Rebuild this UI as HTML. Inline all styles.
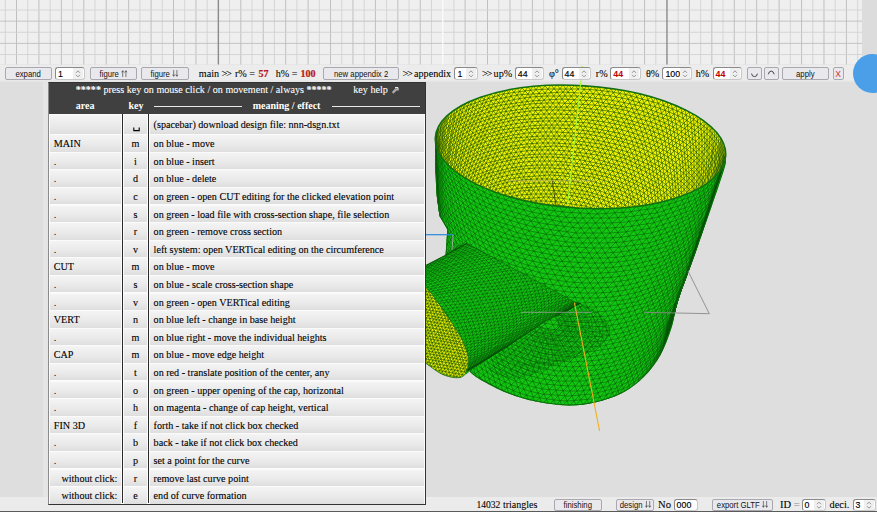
<!DOCTYPE html>
<html><head><meta charset="utf-8"><style>
html,body{margin:0;padding:0;overflow:hidden;}
body{width:877px;height:512px;overflow:hidden;position:relative;background:#dedede;font-family:"Liberation Sans",sans-serif;}
.a{position:absolute;}
.btn{position:absolute;box-sizing:border-box;border:1px solid #a8a8ae;border-radius:2px;background:#e9e9ed;color:#111;text-align:center;font-family:"Liberation Sans",sans-serif;white-space:nowrap;}
.inp{position:absolute;box-sizing:border-box;border:1px solid #8a8a8a;border-right-color:#c8c8c8;border-bottom-color:#c8c8c8;border-radius:3px;background:#fff;color:#000;font-family:"Liberation Sans",sans-serif;}
.spin{position:absolute;right:1px;top:0;width:10px;background:#efefef;display:flex;align-items:center;justify-content:center}
.lab{position:absolute;font-family:"Liberation Serif",serif;font-weight:normal;color:#000;white-space:nowrap;line-height:14px;-webkit-text-stroke:0.08px #000}
.cell{position:absolute;box-sizing:border-box;background:linear-gradient(#f4f4f4,#e9e9e9 60%,#dedede);font-family:"Liberation Serif",serif;font-size:10.15px;color:#000;white-space:nowrap;overflow:hidden;-webkit-text-stroke:0.1px #000}
</style></head><body>
<svg class="a" style="left:0;top:0" width="877" height="65" viewBox="0 0 877 65"><rect x="0" y="0" width="862" height="64.5" fill="#efefef"/><line x1="5.29" y1="0" x2="5.29" y2="64.5" stroke="#d2d2d2" stroke-width="0.9"/><line x1="16.5" y1="0" x2="16.5" y2="64.5" stroke="#c0c0c0" stroke-width="1"/><line x1="27.71" y1="0" x2="27.71" y2="64.5" stroke="#d2d2d2" stroke-width="0.9"/><line x1="38.93" y1="0" x2="38.93" y2="64.5" stroke="#c0c0c0" stroke-width="1"/><line x1="50.14" y1="0" x2="50.14" y2="64.5" stroke="#d2d2d2" stroke-width="0.9"/><line x1="61.36" y1="0" x2="61.36" y2="64.5" stroke="#c0c0c0" stroke-width="1"/><line x1="72.57" y1="0" x2="72.57" y2="64.5" stroke="#d2d2d2" stroke-width="0.9"/><line x1="83.79" y1="0" x2="83.79" y2="64.5" stroke="#c0c0c0" stroke-width="1"/><line x1="95" y1="0" x2="95" y2="64.5" stroke="#d2d2d2" stroke-width="0.9"/><line x1="106.22" y1="0" x2="106.22" y2="64.5" stroke="#c0c0c0" stroke-width="1"/><line x1="117.44" y1="0" x2="117.44" y2="64.5" stroke="#d2d2d2" stroke-width="0.9"/><line x1="128.65" y1="0" x2="128.65" y2="64.5" stroke="#c0c0c0" stroke-width="1"/><line x1="139.86" y1="0" x2="139.86" y2="64.5" stroke="#d2d2d2" stroke-width="0.9"/><line x1="151.08" y1="0" x2="151.08" y2="64.5" stroke="#c0c0c0" stroke-width="1"/><line x1="162.29" y1="0" x2="162.29" y2="64.5" stroke="#d2d2d2" stroke-width="0.9"/><line x1="173.51" y1="0" x2="173.51" y2="64.5" stroke="#c0c0c0" stroke-width="1"/><line x1="184.72" y1="0" x2="184.72" y2="64.5" stroke="#d2d2d2" stroke-width="0.9"/><line x1="195.94" y1="0" x2="195.94" y2="64.5" stroke="#c0c0c0" stroke-width="1"/><line x1="207.16" y1="0" x2="207.16" y2="64.5" stroke="#d2d2d2" stroke-width="0.9"/><line x1="229.59" y1="0" x2="229.59" y2="64.5" stroke="#d2d2d2" stroke-width="0.9"/><line x1="240.8" y1="0" x2="240.8" y2="64.5" stroke="#c0c0c0" stroke-width="1"/><line x1="252.02" y1="0" x2="252.02" y2="64.5" stroke="#d2d2d2" stroke-width="0.9"/><line x1="263.23" y1="0" x2="263.23" y2="64.5" stroke="#c0c0c0" stroke-width="1"/><line x1="274.44" y1="0" x2="274.44" y2="64.5" stroke="#d2d2d2" stroke-width="0.9"/><line x1="285.66" y1="0" x2="285.66" y2="64.5" stroke="#c0c0c0" stroke-width="1"/><line x1="296.88" y1="0" x2="296.88" y2="64.5" stroke="#d2d2d2" stroke-width="0.9"/><line x1="308.09" y1="0" x2="308.09" y2="64.5" stroke="#c0c0c0" stroke-width="1"/><line x1="319.31" y1="0" x2="319.31" y2="64.5" stroke="#d2d2d2" stroke-width="0.9"/><line x1="330.52" y1="0" x2="330.52" y2="64.5" stroke="#c0c0c0" stroke-width="1"/><line x1="341.74" y1="0" x2="341.74" y2="64.5" stroke="#d2d2d2" stroke-width="0.9"/><line x1="352.95" y1="0" x2="352.95" y2="64.5" stroke="#c0c0c0" stroke-width="1"/><line x1="364.17" y1="0" x2="364.17" y2="64.5" stroke="#d2d2d2" stroke-width="0.9"/><line x1="375.38" y1="0" x2="375.38" y2="64.5" stroke="#c0c0c0" stroke-width="1"/><line x1="386.6" y1="0" x2="386.6" y2="64.5" stroke="#d2d2d2" stroke-width="0.9"/><line x1="397.81" y1="0" x2="397.81" y2="64.5" stroke="#c0c0c0" stroke-width="1"/><line x1="409.03" y1="0" x2="409.03" y2="64.5" stroke="#d2d2d2" stroke-width="0.9"/><line x1="420.24" y1="0" x2="420.24" y2="64.5" stroke="#c0c0c0" stroke-width="1"/><line x1="431.46" y1="0" x2="431.46" y2="64.5" stroke="#d2d2d2" stroke-width="0.9"/><line x1="453.89" y1="0" x2="453.89" y2="64.5" stroke="#d2d2d2" stroke-width="0.9"/><line x1="465.1" y1="0" x2="465.1" y2="64.5" stroke="#c0c0c0" stroke-width="1"/><line x1="476.31" y1="0" x2="476.31" y2="64.5" stroke="#d2d2d2" stroke-width="0.9"/><line x1="487.53" y1="0" x2="487.53" y2="64.5" stroke="#c0c0c0" stroke-width="1"/><line x1="498.75" y1="0" x2="498.75" y2="64.5" stroke="#d2d2d2" stroke-width="0.9"/><line x1="509.96" y1="0" x2="509.96" y2="64.5" stroke="#c0c0c0" stroke-width="1"/><line x1="521.17" y1="0" x2="521.17" y2="64.5" stroke="#d2d2d2" stroke-width="0.9"/><line x1="532.39" y1="0" x2="532.39" y2="64.5" stroke="#c0c0c0" stroke-width="1"/><line x1="543.6" y1="0" x2="543.6" y2="64.5" stroke="#d2d2d2" stroke-width="0.9"/><line x1="554.82" y1="0" x2="554.82" y2="64.5" stroke="#c0c0c0" stroke-width="1"/><line x1="566.03" y1="0" x2="566.03" y2="64.5" stroke="#d2d2d2" stroke-width="0.9"/><line x1="577.25" y1="0" x2="577.25" y2="64.5" stroke="#c0c0c0" stroke-width="1"/><line x1="588.46" y1="0" x2="588.46" y2="64.5" stroke="#d2d2d2" stroke-width="0.9"/><line x1="599.68" y1="0" x2="599.68" y2="64.5" stroke="#c0c0c0" stroke-width="1"/><line x1="610.89" y1="0" x2="610.89" y2="64.5" stroke="#d2d2d2" stroke-width="0.9"/><line x1="622.11" y1="0" x2="622.11" y2="64.5" stroke="#c0c0c0" stroke-width="1"/><line x1="633.32" y1="0" x2="633.32" y2="64.5" stroke="#d2d2d2" stroke-width="0.9"/><line x1="644.54" y1="0" x2="644.54" y2="64.5" stroke="#c0c0c0" stroke-width="1"/><line x1="655.75" y1="0" x2="655.75" y2="64.5" stroke="#d2d2d2" stroke-width="0.9"/><line x1="678.18" y1="0" x2="678.18" y2="64.5" stroke="#d2d2d2" stroke-width="0.9"/><line x1="689.4" y1="0" x2="689.4" y2="64.5" stroke="#c0c0c0" stroke-width="1"/><line x1="700.62" y1="0" x2="700.62" y2="64.5" stroke="#d2d2d2" stroke-width="0.9"/><line x1="711.83" y1="0" x2="711.83" y2="64.5" stroke="#c0c0c0" stroke-width="1"/><line x1="723.04" y1="0" x2="723.04" y2="64.5" stroke="#d2d2d2" stroke-width="0.9"/><line x1="734.26" y1="0" x2="734.26" y2="64.5" stroke="#c0c0c0" stroke-width="1"/><line x1="745.47" y1="0" x2="745.47" y2="64.5" stroke="#d2d2d2" stroke-width="0.9"/><line x1="756.69" y1="0" x2="756.69" y2="64.5" stroke="#c0c0c0" stroke-width="1"/><line x1="767.9" y1="0" x2="767.9" y2="64.5" stroke="#d2d2d2" stroke-width="0.9"/><line x1="779.12" y1="0" x2="779.12" y2="64.5" stroke="#c0c0c0" stroke-width="1"/><line x1="790.33" y1="0" x2="790.33" y2="64.5" stroke="#d2d2d2" stroke-width="0.9"/><line x1="801.55" y1="0" x2="801.55" y2="64.5" stroke="#c0c0c0" stroke-width="1"/><line x1="812.76" y1="0" x2="812.76" y2="64.5" stroke="#d2d2d2" stroke-width="0.9"/><line x1="823.98" y1="0" x2="823.98" y2="64.5" stroke="#c0c0c0" stroke-width="1"/><line x1="835.19" y1="0" x2="835.19" y2="64.5" stroke="#d2d2d2" stroke-width="0.9"/><line x1="846.41" y1="0" x2="846.41" y2="64.5" stroke="#c0c0c0" stroke-width="1"/><line x1="857.62" y1="0" x2="857.62" y2="64.5" stroke="#d2d2d2" stroke-width="0.9"/><line x1="0" y1="10.03" x2="862" y2="10.03" stroke="#d2d2d2" stroke-width="0.9"/><line x1="0" y1="21.15" x2="862" y2="21.15" stroke="#c0c0c0" stroke-width="0.9"/><line x1="0" y1="32.28" x2="862" y2="32.28" stroke="#d2d2d2" stroke-width="0.9"/><line x1="0" y1="43.4" x2="862" y2="43.4" stroke="#c0c0c0" stroke-width="0.9"/><line x1="0" y1="54.53" x2="862" y2="54.53" stroke="#d2d2d2" stroke-width="0.9"/><line x1="218.37" y1="0" x2="218.37" y2="64.5" stroke="#8a8a8a" stroke-width="1.4"/><line x1="666.97" y1="0" x2="666.97" y2="64.5" stroke="#8a8a8a" stroke-width="1.4"/><line x1="442.67" y1="0" x2="442.67" y2="64.5" stroke="#fafafa" stroke-width="1.4"/></svg>
<div class="a" style="left:862px;top:0;width:15px;height:65px;background:#dcdcdc"></div>
<div class="a" style="left:0;top:64.6px;width:877px;height:17.4px;background:linear-gradient(#ececec 85%,#e4e4e4)"></div>
<div class="a" style="left:0;top:496.8px;width:877px;height:14px;background:#ebebeb"></div>
<div class="a" style="left:0;top:510.6px;width:877px;height:1.4px;background:#5a5a5a"></div>
<svg class="a" style="left:0;top:0" width="877" height="512" viewBox="0 0 877 512">
<defs>
<clipPath id="cc"><path d="M435 140 L435.2 170 L436.6 195 L439.5 216 L447.3 229.5 L445.5 256 L452 300 L470 372 L470 372C471.7 373.2 473.8 375.9 480 379.4C486.2 382.9 498.3 389.4 507.4 393C516.5 396.6 524.7 399.2 534.7 401.3C544.7 403.4 557.6 405.2 567.6 405.4C577.6 405.6 585.9 404.7 595 402.6C604.1 400.5 614.1 397.3 622.3 393C630.5 388.7 637.8 383 644.2 376.6C650.6 370.2 656 362.9 660.6 354.7C665.2 346.5 668.6 336.5 671.6 327.4C674.6 318.3 674.1 313.4 678.4 300C682.7 286.6 690 268.6 697.5 247.3C705 226 718.6 186.6 723.3 172C727.9 157.4 725 162 725.4 160 L724.5 146.2 L719.8 136.6 L711.6 127.2 L700.2 118.3 L685.9 110.1 L669 102.7 L649.8 96.5 L629 91.5 L607 87.9 L584.3 85.7 L561.6 85 L539.3 85.9 L518 88.2 L498.2 92 L480.5 97.2 L465.3 103.5 L452.9 111 L443.6 119.3 L437.7 128.2 L435.3 137.7Z"/></clipPath>
<clipPath id="ce"><ellipse cx="580.5" cy="146.8" rx="145.5" ry="61.2" transform="rotate(3.59 580.5 146.8)"/></clipPath>
<clipPath id="cy"><path d="M380 290C384.6 282.6 418.9 269 425.5 265.5C432.1 262 441.9 257.2 446 255C450.1 252.8 459.1 241.8 466.5 243.5C473.9 245.2 509.2 266.2 520 272C530.8 277.8 567.9 298.6 574.4 301.7C580.9 304.8 586.4 301.8 585 303C583.6 304.2 564.1 312.1 560 314C555.9 315.9 549.5 318.6 544 322C538.5 325.4 512.1 343.4 505 348C497.9 352.6 476.6 365.9 472.7 368.5C468.8 371.1 467.2 373.1 466 374C464.8 374.9 463.3 377.1 461 377.2C458.7 377.3 446.9 376.2 443.4 374.8C439.8 373.4 431.8 366.5 425.5 363C419.2 359.5 384.6 347.3 380 340C375.4 332.7 375.4 297.4 380 290Z"/></clipPath>
<clipPath id="cp"><path d="M400 270C404.2 260.3 418.3 280.3 425.5 287C432.7 293.7 438.1 303 443.4 310.4C448.7 317.8 453.6 324.9 457.5 331.5C461.4 338.1 465.1 344.4 466.8 350.3C468.6 356.2 469 362.1 468 366.6C467 371.1 465.1 375.8 461 377.2C456.9 378.6 449.3 377.2 443.4 374.8C437.5 372.4 432.7 368 425.5 363C418.3 358 404.2 360.5 400 345C395.8 329.5 395.8 279.7 400 270Z"/></clipPath>
</defs>
<path d="M435 140 L435.2 170 L436.6 195 L439.5 216 L447.3 229.5 L445.5 256 L452 300 L470 372 L470 372C471.7 373.2 473.8 375.9 480 379.4C486.2 382.9 498.3 389.4 507.4 393C516.5 396.6 524.7 399.2 534.7 401.3C544.7 403.4 557.6 405.2 567.6 405.4C577.6 405.6 585.9 404.7 595 402.6C604.1 400.5 614.1 397.3 622.3 393C630.5 388.7 637.8 383 644.2 376.6C650.6 370.2 656 362.9 660.6 354.7C665.2 346.5 668.6 336.5 671.6 327.4C674.6 318.3 674.1 313.4 678.4 300C682.7 286.6 690 268.6 697.5 247.3C705 226 718.6 186.6 723.3 172C727.9 157.4 725 162 725.4 160 L724.5 146.2 L719.8 136.6 L711.6 127.2 L700.2 118.3 L685.9 110.1 L669 102.7 L649.8 96.5 L629 91.5 L607 87.9 L584.3 85.7 L561.6 85 L539.3 85.9 L518 88.2 L498.2 92 L480.5 97.2 L465.3 103.5 L452.9 111 L443.6 119.3 L437.7 128.2 L435.3 137.7Z" fill="#12c612"/>
<g clip-path="url(#cc)"><path d="M726 154l-1 7l-3 7l-4 6l-7 6l-8 6l-9 5l-11 4l-12 4l-13 4l-14 2l-16 2l-15 1l-16 1l-17-1l-16-1l-16-2l-15-3l-16-3l-14-4l-13-5l-12-5l-11-6l-9-6l-8-6l-7-7l-4-7l-3-7l-1-7M724 159l-1 7l-2 7l-5 6l-6 6l-8 6l-9 5l-11 4l-12 4l-13 4l-15 2l-14 2l-16 1l-16 1l-16-1l-16-1l-16-2l-16-3l-15-4l-14-4l-13-4l-12-6l-11-5l-9-7l-8-6l-7-7l-4-7l-3-7l-1-7M723 164l-1 6l-3 7l-4 7l-6 6l-8 6l-10 5l-10 4l-12 4l-13 4l-15 2l-14 2l-16 1l-16 0l-16 0l-16-1l-16-2l-15-3l-15-4l-14-4l-13-5l-12-5l-11-6l-9-6l-8-7l-6-7l-5-7l-3-7l0-7M721 168l-1 7l-2 7l-5 7l-6 6l-8 5l-9 6l-11 4l-11 4l-14 4l-14 2l-14 2l-16 1l-16 0l-16 0l-16-1l-15-3l-16-2l-14-4l-15-4l-13-5l-12-6l-10-6l-9-6l-8-7l-6-7l-5-7l-2-7l-1-7M720 173l-1 7l-3 7l-4 6l-6 7l-8 5l-9 6l-11 4l-12 4l-13 4l-14 2l-14 2l-16 1l-15 0l-16 0l-16-2l-16-2l-15-3l-15-3l-14-5l-13-5l-12-5l-10-6l-9-7l-8-6l-6-7l-5-7l-2-8l-1-7M718 177l-1 7l-2 7l-5 7l-6 6l-7 6l-10 6l-10 4l-12 4l-13 4l-14 2l-14 2l-15 1l-16 0l-16 0l-16-2l-15-2l-16-3l-14-4l-14-4l-13-5l-12-6l-10-6l-9-6l-8-7l-6-7l-4-7l-3-8l-1-7M717 182l-1 7l-3 7l-4 7l-6 6l-8 6l-9 5l-10 5l-12 4l-13 4l-14 2l-14 2l-15 1l-16 0l-16 0l-15-2l-16-2l-15-3l-14-4l-14-4l-13-5l-12-6l-10-6l-9-7l-8-7l-6-7l-4-7l-3-8l-1-7M715 186l-1 8l-2 7l-5 7l-6 6l-7 6l-9 5l-11 5l-11 4l-13 4l-14 2l-14 2l-15 1l-16 0l-15 0l-16-2l-15-2l-15-3l-15-4l-13-5l-13-5l-12-6l-10-6l-9-6l-8-7l-6-8l-4-7l-3-7l-1-8M714 191l-1 7l-3 7l-4 7l-6 7l-7 6l-9 5l-11 5l-11 4l-13 4l-14 2l-14 2l-15 1l-15 0l-16-1l-15-1l-16-2l-15-4l-14-3l-14-5l-12-5l-12-6l-10-6l-9-7l-8-7l-6-7l-4-8l-3-7l-1-8M712 195l-1 8l-2 7l-4 7l-6 7l-8 6l-9 5l-10 5l-12 4l-12 4l-14 2l-14 2l-15 1l-15 0l-16-1l-15-1l-15-3l-15-3l-14-4l-14-4l-13-6l-11-5l-10-7l-9-7l-8-7l-6-7l-4-8l-3-7l0-8M711 200l-1 8l-3 7l-4 7l-6 6l-7 6l-9 6l-10 5l-12 4l-12 3l-14 3l-14 2l-15 1l-15 0l-15-1l-16-1l-15-3l-15-3l-14-4l-13-5l-13-5l-11-6l-10-6l-9-7l-8-7l-6-8l-4-7l-2-8l-1-8M709 204l-1 8l-2 7l-4 7l-6 7l-8 6l-8 6l-11 5l-11 4l-12 3l-14 3l-14 2l-15 1l-15 0l-15-1l-15-1l-15-3l-15-3l-14-4l-13-5l-13-5l-11-6l-10-7l-9-7l-8-7l-6-8l-4-7l-2-8l-1-8M708 209l-1 8l-3 7l-4 7l-6 7l-7 6l-9 6l-10 5l-11 4l-13 3l-13 3l-14 2l-14 1l-15 0l-16-1l-15-1l-15-3l-14-3l-14-4l-14-5l-12-6l-11-6l-10-6l-9-7l-8-8l-5-7l-5-8l-2-8l-1-8M706 213l-1 8l-2 8l-4 7l-6 7l-7 6l-9 5l-10 5l-11 5l-13 3l-13 3l-14 2l-14 1l-15 0l-15-1l-15-2l-15-2l-15-3l-14-5l-13-4l-12-6l-11-6l-10-7l-9-7l-8-7l-5-8l-4-8l-3-8l-1-8M705 218l-1 8l-3 7l-4 7l-5 7l-8 7l-8 5l-10 5l-12 5l-12 3l-13 3l-14 2l-14 1l-15 0l-15-1l-15-2l-15-2l-14-4l-14-4l-13-5l-12-5l-12-6l-10-7l-8-7l-7-8l-6-8l-4-8l-3-8l-1-7M703 222l-1 8l-2 8l-4 7l-6 7l-7 6l-9 6l-10 5l-11 5l-12 3l-13 3l-14 2l-14 1l-15 0l-15-1l-15-2l-14-2l-15-4l-13-4l-13-5l-13-6l-11-6l-10-7l-8-7l-7-7l-6-8l-4-8l-3-8l-1-8M702 227l-1 8l-3 7l-4 8l-5 7l-7 6l-9 6l-10 5l-11 4l-12 4l-13 3l-14 2l-14 1l-15 0l-14-1l-15-2l-15-2l-14-4l-14-4l-13-5l-12-6l-11-6l-10-7l-8-7l-7-8l-6-8l-4-8l-3-8l0-8M700 231l-1 8l-2 8l-4 7l-6 7l-7 7l-8 6l-10 5l-11 4l-12 4l-13 3l-14 2l-14 1l-14 0l-15-1l-15-2l-14-3l-14-3l-14-4l-13-5l-12-6l-11-7l-10-6l-8-8l-7-8l-6-8l-4-8l-2-8l-1-8M699 236l-1 8l-3 7l-4 8l-5 7l-7 7l-9 5l-9 6l-11 4l-12 4l-13 3l-14 2l-14 1l-14 0l-15-1l-14-2l-15-3l-14-3l-13-5l-13-5l-12-5l-11-7l-10-7l-8-7l-7-8l-6-8l-4-8l-2-9l-1-8M697 240l-1 8l-2 8l-4 8l-6 7l-7 6l-8 6l-10 5l-11 5l-11 4l-13 3l-14 1l-14 1l-14 1l-14-1l-15-2l-14-3l-14-3l-14-5l-12-5l-12-6l-11-6l-10-7l-8-8l-7-8l-6-8l-4-8l-2-8l-1-9M696 244l-1 9l-2 8l-4 7l-6 7l-7 7l-8 6l-10 5l-11 5l-12 4l-12 2l-13 2l-14 1l-15 0l-14 0l-14-2l-15-3l-14-4l-13-4l-13-5l-11-6l-11-7l-10-7l-8-7l-7-8l-6-8l-4-9l-2-8l-1-9M694 249l-1 8l-2 8l-4 8l-5 7l-7 7l-9 6l-9 5l-11 5l-12 3l-12 3l-13 2l-14 1l-14 0l-15 0l-14-2l-14-3l-14-4l-13-4l-13-5l-11-6l-11-7l-10-7l-8-8l-7-8l-5-8l-4-8l-3-9l-1-8M693 253l-1 8l-2 8l-4 8l-6 8l-7 6l-8 6l-9 6l-11 4l-12 4l-12 3l-13 2l-14 1l-14 0l-14-1l-15-1l-14-3l-13-4l-14-4l-12-6l-12-6l-10-6l-10-7l-8-8l-7-8l-5-8l-4-9l-3-9l-1-8M691 257l-1 9l-2 8l-4 8l-5 7l-7 7l-8 6l-10 6l-10 4l-12 4l-12 3l-13 2l-14 1l-14 0l-14-1l-14-1l-14-3l-14-4l-13-4l-12-6l-12-6l-10-6l-10-8l-8-7l-7-9l-5-8l-4-9l-3-8l0-9M690 262l-1 8l-2 8l-4 8l-6 8l-6 7l-9 6l-9 5l-10 5l-12 4l-12 3l-13 2l-14 1l-14 0l-14-1l-14-2l-14-2l-13-4l-13-5l-13-5l-11-6l-10-7l-10-7l-8-8l-7-8l-5-9l-4-8l-2-9l-1-9M688 266l-1 8l-2 9l-4 8l-5 7l-7 7l-8 7l-9 5l-11 5l-11 4l-12 3l-13 2l-14 1l-13 0l-14-1l-14-2l-14-2l-14-4l-13-5l-12-5l-11-6l-11-7l-9-7l-8-8l-7-9l-5-8l-4-9l-2-9l-1-8M687 270l-1 9l-2 8l-4 8l-5 8l-7 7l-8 6l-10 6l-10 5l-11 4l-12 3l-13 2l-14 1l-13 0l-14-1l-14-2l-14-2l-13-4l-13-5l-12-5l-11-6l-11-7l-9-8l-8-8l-7-8l-5-9l-4-8l-2-9l-1-9M685 274l0 9l-3 9l-4 8l-5 7l-7 7l-8 7l-9 6l-10 4l-11 4l-12 4l-13 2l-13 1l-14 0l-14-1l-14-2l-13-3l-13-3l-13-5l-12-5l-11-7l-11-7l-9-7l-8-8l-7-8l-5-9l-4-9l-2-9l-1-9M684 279l-1 8l-2 9l-4 8l-5 8l-7 7l-8 7l-9 5l-10 5l-11 4l-12 3l-13 3l-13 1l-14 0l-13-1l-14-2l-14-3l-13-3l-12-5l-12-6l-12-6l-10-7l-9-7l-8-8l-7-9l-5-9l-4-8l-2-9l-1-9M682 283l0 9l-3 8l-4 9l-5 7l-6 8l-8 6l-9 6l-10 5l-12 4l-11 3l-13 2l-13 2l-14 0l-13-1l-14-2l-13-3l-13-3l-13-5l-12-6l-11-6l-10-7l-9-8l-8-8l-7-8l-5-9l-3-9l-3-9l-1-9M681 287l-1 9l-2 9l-4 8l-5 8l-7 7l-8 7l-9 6l-10 5l-11 4l-11 3l-13 2l-13 2l-13 0l-14-1l-13-2l-14-3l-13-4l-12-4l-12-6l-11-6l-10-7l-9-8l-8-8l-6-9l-6-8l-3-9l-3-10l0-9M679 291l0 9l-3 9l-3 8l-6 8l-6 8l-8 6l-9 6l-10 5l-11 5l-11 3l-13 2l-13 1l-13 1l-13-1l-14-2l-13-3l-13-4l-12-4l-12-6l-11-6l-10-7l-9-8l-8-8l-6-9l-6-9l-3-9l-3-9l0-9M678 295l-1 9l-2 9l-4 9l-5 8l-6 7l-8 7l-9 6l-10 5l-11 4l-12 4l-12 2l-13 1l-13 1l-13-1l-13-2l-14-3l-12-4l-13-4l-11-6l-11-6l-10-8l-9-7l-8-9l-6-8l-5-9l-4-9l-2-10l-1-9M676 300l0 9l-3 9l-3 8l-5 8l-7 8l-7 7l-9 6l-10 5l-11 4l-12 3l-12 3l-13 1l-13 0l-13 0l-13-2l-13-3l-13-4l-12-5l-12-5l-11-7l-9-7l-9-7l-8-9l-6-8l-5-10l-4-9l-2-9l-1-9M675 304l-1 9l-2 9l-4 9l-5 8l-6 7l-8 7l-8 6l-10 5l-11 5l-12 3l-12 3l-12 1l-13 0l-14 0l-13-2l-13-3l-12-4l-12-5l-12-5l-11-7l-10-7l-8-8l-8-8l-6-9l-5-9l-4-9l-2-10l-1-9M673 308l0 9l-3 9l-3 9l-5 8l-6 8l-8 7l-9 6l-9 5l-11 5l-12 3l-12 2l-12 2l-13 0l-13 0l-13-2l-13-3l-13-4l-12-5l-11-5l-11-7l-10-7l-8-8l-8-8l-6-9l-5-9l-4-10l-2-9l-1-10M672 312l-1 9l-2 9l-4 9l-5 8l-6 8l-7 7l-9 6l-10 6l-10 4l-12 4l-12 2l-12 2l-13 0l-13-1l-13-1l-13-3l-12-4l-12-5l-11-5l-11-7l-10-7l-8-8l-8-8l-6-9l-5-10l-4-9l-2-10l-1-9M670 316l0 9l-2 10l-4 8l-5 9l-6 8l-8 7l-8 6l-10 5l-10 5l-12 4l-12 2l-12 2l-13 0l-13-1l-12-1l-13-3l-13-4l-11-5l-12-5l-10-7l-10-7l-8-8l-8-9l-6-9l-5-9l-4-9l-2-10l-1-10M669 320l-1 9l-2 10l-3 9l-5 8l-7 8l-7 7l-8 7l-10 5l-10 5l-12 3l-11 3l-13 1l-12 1l-13-1l-13-1l-13-3l-12-4l-12-5l-11-5l-10-7l-10-7l-8-8l-8-9l-6-9l-5-9l-4-10l-2-9l0-10M668 324l-1 10l-2 9l-4 9l-5 8l-6 8l-7 8l-9 6l-9 6l-11 4l-11 4l-11 3l-13 1l-12 1l-13-1l-13-2l-12-2l-12-4l-12-5l-11-6l-11-6l-9-7l-9-8l-7-9l-6-9l-5-9l-3-10l-3-10l0-10M666 328l-1 10l-2 9l-3 9l-5 9l-6 8l-8 7l-8 7l-9 5l-11 5l-11 4l-11 2l-12 2l-13 1l-13-1l-12-2l-13-2l-12-4l-11-5l-11-6l-11-6l-9-7l-9-9l-7-8l-6-9l-5-10l-3-9l-2-10l-1-10M669 320l-3 11M672 312l-3 11l-4 14M675 304l-3 10l-3 14l-4 14M678 295l-3 10l-3 14l-4 14l-5 14M678 296l-3 14l-4 14l-5 14l-4 14M681 287l-3 14l-4 14l-4 14l-5 14l-5 14M684 279l-3 12l-4 14l-4 14l-5 14l-5 14l-6 14M687 270l-3 12l-4 14l-4 14l-5 14l-5 14l-6 14l-6 14M690 262l-3 11l-4 14l-4 14l-5 14l-5 14l-5 14l-7 13l-6 14M693 253l-3 11l-4 14l-4 14l-5 14l-5 13l-5 14l-6 14l-7 14l-7 13M696 244l-3 11l-4 14l-4 13l-4 14l-5 14l-6 14l-6 14l-6 13l-7 14l-8 13M699 236l-3 10l-4 13l-4 14l-4 14l-5 14l-6 13l-6 14l-6 14l-7 13l-7 14l-8 13M702 227l-3 9l-4 14l-4 14l-4 14l-5 13l-6 14l-6 14l-6 13l-7 14l-7 13l-7 13l-8 14M702 227l-4 14l-3 13l-5 14l-5 14l-5 14l-6 13l-7 14l-6 13l-8 14l-7 13l-8 13l-8 13M705 218l-4 13l-3 14l-5 14l-5 13l-5 14l-6 14l-6 13l-7 14l-7 13l-8 13l-8 13l-8 13l-8 13M708 209l-3 13l-4 14l-5 13l-5 14l-5 14l-6 13l-6 14l-7 13l-7 13l-8 14l-8 13l-8 12l-8 13l-9 12M711 200l-3 13l-4 13l-5 14l-4 13l-6 14l-6 14l-6 13l-7 14l-7 13l-7 13l-8 13l-8 13l-9 12l-9 13l-8 12M714 191l-3 12l-4 14l-4 13l-5 14l-6 13l-5 14l-7 13l-7 14l-7 13l-7 13l-8 13l-8 13l-9 13l-8 12l-9 12l-9 12M717 182l-3 12l-4 13l-4 14l-5 13l-5 14l-6 13l-7 14l-6 13l-7 13l-8 14l-8 13l-8 12l-8 13l-9 12l-9 12l-9 12l-9 12M720 173l-3 11l-4 14l-4 13l-5 14l-5 13l-6 14l-6 13l-7 13l-7 14l-8 13l-8 13l-8 13l-8 12l-9 13l-9 12l-9 12l-9 11l-10 12M723 164l-3 11l-4 13l-4 14l-5 13l-5 14l-6 13l-6 13l-7 14l-7 13l-8 13l-7 13l-9 13l-8 12l-9 13l-9 12l-9 12l-9 11l-10 12l-9 11M726 154l-3 11l-4 14l-4 13l-5 14l-5 13l-6 13l-6 14l-7 13l-7 13l-7 13l-8 13l-8 13l-9 13l-9 12l-9 12l-9 12l-9 12l-10 11l-9 11l-9 11M726 156l-4 13l-4 14l-5 13l-5 13l-6 14l-6 13l-7 13l-7 13l-7 14l-8 12l-8 13l-9 13l-9 12l-9 12l-9 12l-9 12l-10 11l-9 11l-10 11l-9 10M726 156l-3 8M725 160l-4 13l-5 13l-5 14l-5 13l-7 13l-6 13l-7 14l-8 13l-8 13l-8 12l-9 13l-9 12l-9 12l-9 12l-9 12l-10 11l-9 11l-10 11l-9 11l-10 10M725 160l-2 5l-3 8M724 163l-4 14l-6 13l-5 13l-7 13l-6 14l-7 13l-8 13l-8 13l-8 12l-9 13l-8 12l-10 13l-9 12l-9 11l-10 12l-9 11l-10 10l-9 11l-10 10l-10 10M724 163l-2 6l-2 6l-3 7M723 167l-6 13l-5 13l-6 14l-7 13l-7 13l-8 13l-8 13l-8 13l-9 12l-8 13l-9 12l-10 12l-9 11l-10 12l-9 11l-10 11l-10 10l-9 10l-10 10l-9 9M723 167l-2 6l-2 6l-2 5l-3 7M721 170l-6 14l-6 13l-7 13l-7 13l-8 13l-8 13l-8 13l-8 12l-9 13l-9 12l-10 12l-9 11l-10 12l-10 11l-9 11l-10 10l-10 10l-9 10l-10 10l-9 9M721 170l-1 7l-2 6l-2 5l-2 6l-3 6M718 174l-6 13l-7 13l-7 13l-8 13l-7 13l-9 13l-8 12l-9 13l-9 12l-10 12l-9 11l-10 12l-10 11l-9 11l-10 10l-10 10l-10 10l-9 10l-10 9l-9 9M718 174l-1 6l-1 6l-1 6l-2 6l-2 5l-3 6M715 177l-7 13l-7 13l-7 13l-8 13l-9 13l-8 12l-9 13l-9 12l-10 12l-9 12l-10 11l-10 11l-10 11l-10 10l-9 11l-10 10l-10 9l-9 9l-10 9l-9 8M715 177l0 7l-1 6l-1 6l-1 6l-2 5l-2 6l-3 5l-3 9M711 180l-7 13l-7 13l-8 13l-9 13l-8 12l-9 13l-9 12l-10 12l-9 12l-10 11l-10 11l-10 11l-10 11l-10 10l-10 10l-9 9l-10 9l-9 9l-9 9l-9 8M711 180l1 7l0 6l-1 7l-1 6l-1 5l-2 6l-2 5l-3 5l-3 9M707 183l-7 13l-8 13l-9 13l-8 12l-9 13l-9 12l-10 12l-10 12l-9 11l-10 11l-10 11l-10 11l-10 10l-10 10l-10 9l-9 10l-10 9l-9 8l-9 8l-9 8M707 183l1 7l1 7l0 6l-1 6l-1 6l-1 6l-2 5l-3 5l-2 5l-3 8M703 186l-8 13l-9 13l-8 12l-9 13l-10 12l-9 12l-10 12l-10 11l-10 11l-10 11l-10 11l-10 10l-10 10l-9 10l-10 9l-10 9l-9 8l-9 8l-9 8l-8 8M703 186l1 7l1 7l1 7l0 6l-1 6l-1 6l-1 5l-2 6l-3 5l-2 5l-3 7M698 189l-9 13l-8 12l-9 13l-10 12l-9 12l-10 12l-10 11l-10 11l-10 11l-10 11l-10 10l-10 10l-10 10l-10 9l-9 9l-10 9l-9 8l-9 8l-8 7l-9 7M698 189l2 7l1 7l1 7l0 6l0 7l0 6l-1 5l-2 6l-1 5l-3 5l-2 5l-3 7M692 192l-8 12l-9 13l-10 12l-9 12l-10 12l-10 11l-10 11l-10 11l-10 11l-10 10l-11 10l-10 10l-9 9l-10 9l-10 9l-9 8l-9 8l-9 8l-8 7l-8 6M692 192l3 7l2 7l1 7l1 7l0 6l0 6l0 6l-1 6l-2 5l-1 5l-3 5l-2 5l-3 6M687 194l-9 13l-10 12l-9 12l-10 12l-10 11l-10 11l-10 11l-11 11l-10 10l-10 11l-10 9l-10 10l-10 9l-10 8l-9 9l-9 7l-9 8l-8 7l-8 7l-8 6M687 194l2 8l3 7l2 7l1 7l1 7l0 6l0 6l0 6l-1 5l-2 6l-2 5l-2 5l-2 4l-3 6M680 196l-9 13l-10 12l-9 12l-10 11l-11 11l-10 11l-10 11l-10 11l-11 10l-10 9l-10 10l-10 9l-9 9l-10 8l-9 8l-9 7l-8 8l-9 7l-7 6l-8 6M680 196l4 8l2 8l3 7l1 7l2 7l1 6l0 7l0 6l-1 5l-1 6l-1 5l-2 5l-2 5l-2 4l-3 5l-3 8M674 199l-10 12l-10 11l-10 12l-10 11l-10 11l-11 11l-10 11l-10 10l-10 10l-11 9l-10 9l-9 9l-10 8l-9 8l-9 8l-9 7l-8 7l-8 7l-7 6l-7 6M674 199l4 8l3 7l2 8l3 7l1 7l2 7l0 6l1 6l0 6l-1 6l-1 5l-1 6l-2 4l-2 5l-2 4l-3 5l-3 8M667 200l-10 12l-10 12l-10 11l-11 11l-10 11l-10 11l-11 10l-10 10l-10 9l-10 9l-10 9l-10 9l-9 8l-9 7l-9 8l-8 7l-8 6l-8 6l-7 6l-7 6M667 200l4 9l4 8l3 7l2 8l3 7l1 7l2 7l0 6l1 6l0 6l-1 6l-1 5l-1 5l-2 5l-2 4l-2 5l-3 4l-3 7M660 202l-10 12l-11 11l-10 11l-10 11l-11 11l-10 10l-11 10l-10 9l-10 10l-10 8l-10 9l-9 8l-9 8l-9 7l-9 7l-8 7l-7 6l-8 6l-6 6l-7 5M660 202l4 9l4 8l4 8l3 7l2 8l2 7l2 7l1 6l1 7l0 6l0 6l0 5l-1 5l-1 5l-2 5l-2 4l-2 5l-3 4l-3 6M652 204l-10 11l-10 11l-11 11l-11 11l-10 10l-10 10l-11 10l-10 9l-10 9l-10 8l-9 8l-10 8l-9 8l-8 7l-8 6l-8 7l-7 6l-7 5l-7 6l-5 5M652 204l5 8l4 9l4 8l4 8l3 7l2 8l2 7l2 7l1 6l1 6l0 6l0 6l0 6l-1 5l-2 5l-1 4l-2 5l-2 4l-3 4l-3 5M645 205l-11 11l-11 11l-10 11l-11 10l-10 10l-11 10l-10 9l-10 9l-10 9l-9 8l-10 8l-9 7l-8 7l-9 7l-8 6l-7 6l-7 6l-6 6l-6 5l-6 4M645 205l5 9l4 8l5 9l3 8l4 8l3 7l2 8l2 7l2 7l1 6l1 6l0 6l0 6l-1 5l0 5l-2 5l-1 4l-2 5l-2 4l-3 3M637 206l-11 11l-11 11l-10 10l-11 10l-10 10l-11 9l-10 9l-10 9l-10 8l-9 8l-9 8l-9 7l-8 7l-8 6l-8 6l-7 6l-6 5l-6 5l-6 5l-5 5M637 206l5 9l5 9l5 9l4 8l3 8l4 8l3 7l2 8l2 7l2 6l1 7l0 6l1 6l0 5l-1 5l-1 5l-1 5l-1 5l-2 4l-3 4M628 207l-10 11l-11 10l-11 10l-10 10l-11 9l-10 9l-10 9l-10 9l-9 7l-10 8l-8 7l-9 7l-8 7l-7 6l-8 6l-6 5l-6 5l-6 5l-5 5l-5 4M628 207l6 9l5 9l5 9l5 9l4 8l4 8l3 8l3 7l2 7l2 7l1 7l2 6l0 7l1 5l-1 6l0 5l-1 5l-1 4l-2 5l-1 4M620 208l-11 10l-10 10l-11 10l-11 10l-10 9l-10 8l-10 9l-10 8l-9 8l-9 7l-8 7l-9 6l-7 7l-7 6l-7 5l-7 5l-5 5l-5 5l-5 4l-4 4M620 208l6 9l6 9l5 9l5 9l4 9l4 8l4 8l3 8l2 7l3 7l2 7l1 7l1 6l1 6l0 6l0 5l0 5l-1 5l-1 5l-2 4M612 208l-11 10l-11 10l-11 10l-10 9l-10 9l-10 8l-10 8l-9 8l-9 7l-9 7l-8 7l-8 6l-7 6l-7 6l-7 5l-5 5l-6 5l-4 4l-5 4l-3 4M612 208l6 10l5 9l6 9l5 9l5 9l4 9l4 8l4 8l3 8l2 7l3 7l2 7l1 7l1 6l1 6l0 5l0 6l0 5l-1 4l-1 5M603 209l-11 9l-11 10l-10 9l-10 9l-10 9l-10 8l-10 8l-9 7l-9 7l-8 7l-8 6l-7 6l-7 6l-7 5l-6 5l-5 5l-5 4l-4 5l-4 4l-3 3M603 209l6 9l6 10l6 9l5 9l5 9l5 9l4 9l4 8l4 8l3 8l2 7l3 7l1 7l2 6l1 6l1 6l0 6l0 5l-1 5l0 5M594 209l-11 9l-10 9l-11 9l-10 9l-10 8l-9 8l-9 8l-9 7l-9 6l-8 7l-7 6l-7 6l-7 5l-6 5l-5 5l-5 5l-5 4l-3 4l-4 4l-2 3M594 209l7 9l6 10l6 10l6 9l5 9l5 9l4 9l4 9l4 8l4 8l3 7l2 8l2 7l2 7l2 6l1 6l0 6l1 5l-1 5l0 5M585 208l-10 10l-11 9l-10 8l-10 9l-10 7l-9 8l-9 7l-8 7l-8 7l-8 6l-7 6l-7 5l-6 5l-6 5l-5 5l-4 4l-4 4l-3 4l-3 3l-2 4M585 208l7 10l7 10l6 10l5 10l6 9l5 9l5 9l4 9l5 9l3 8l4 8l2 7l3 8l2 7l2 6l1 7l1 6l1 5l0 6l0 5M577 208l-11 9l-10 9l-10 8l-10 8l-9 8l-9 7l-9 7l-8 6l-8 7l-7 5l-7 6l-6 5l-6 5l-5 5l-5 4l-4 4l-3 4l-3 4l-2 3l-2 4M577 208l6 10l7 10l6 10l6 10l6 10l5 9l6 9l4 9l5 9l4 9l3 8l3 8l3 7l3 7l2 7l2 7l1 6l1 6l1 6l0 5M568 207l-10 9l-11 8l-9 8l-10 8l-9 8l-9 6l-8 7l-8 6l-7 6l-7 6l-6 5l-6 5l-5 5l-5 4l-4 5l-4 4l-3 3l-2 4l-2 3l-1 3M568 207l7 11l6 10l7 10l6 10l6 10l6 10l5 9l5 9l4 9l5 9l4 8l3 9l3 7l3 8l3 7l2 7l1 7l2 6l1 6l0 5M559 206l-10 9l-10 8l-10 8l-9 7l-9 7l-8 7l-8 6l-7 6l-7 6l-7 5l-6 5l-5 5l-5 5l-4 4l-3 4l-4 4l-2 3l-2 4l-1 3l-1 3M559 206l7 11l7 10l6 11l7 10l6 10l6 10l5 10l5 9l5 9l5 9l4 9l4 8l3 9l3 7l3 8l3 7l2 7l1 6l2 6l0 6M551 205l-10 8l-10 8l-9 8l-9 7l-9 7l-8 6l-7 6l-7 6l-7 5l-6 6l-5 4l-5 5l-4 4l-4 4l-3 4l-3 4l-2 3l-1 4l-1 3l0 3M551 205l7 11l6 11l7 10l6 11l7 10l6 10l5 10l6 10l5 9l4 9l5 9l4 9l4 8l3 8l3 8l3 8l2 7l2 6l2 7l1 6M542 204l-10 8l-9 7l-9 8l-9 6l-8 7l-7 6l-8 6l-6 5l-6 6l-6 5l-5 4l-4 5l-4 4l-3 4l-3 3l-2 4l-1 3l-1 3l0 3l0 7M542 204l7 11l7 11l6 10l7 11l6 10l6 11l6 10l6 10l5 9l5 10l5 9l4 9l4 9l4 8l3 8l3 8l3 7l2 7l2 7l2 7M534 202l-10 8l-9 7l-9 7l-8 7l-8 6l-7 6l-6 6l-7 5l-5 5l-5 5l-5 4l-4 4l-3 4l-3 4l-2 3l-1 4l-1 3l-1 3l1 6M534 202l7 11l6 11l7 11l7 11l6 11l6 10l6 11l6 10l5 10l6 9l4 10l5 9l4 9l4 9l4 8l3 8l3 8l3 7l2 7l2 7M525 201l-9 7l-9 7l-8 7l-8 6l-7 6l-7 6l-6 5l-6 5l-5 5l-4 4l-4 5l-4 4l-3 3l-2 4l-1 4l-1 3l-1 3l0 5M525 201l7 11l7 11l7 11l6 11l7 11l6 10l6 11l6 10l6 11l5 10l5 9l5 10l4 9l4 9l4 9l4 8l3 8l3 7l2 8l3 7M517 199l-8 7l-9 7l-8 6l-7 6l-7 6l-6 5l-6 5l-5 5l-5 5l-4 4l-4 4l-2 4l-3 4l-1 3l-1 4l-1 3l0 4M517 199l7 11l7 11l7 11l6 12l7 11l6 10l6 11l6 11l6 10l5 10l5 10l5 10l5 10l5 9l4 9l3 8l4 9l3 8l3 7l2 7M510 197l-9 6l-8 7l-7 6l-7 6l-7 5l-6 6l-5 4l-5 5l-4 5l-3 4l-3 4l-3 3l-1 4l-2 3l0 4l0 3M510 197l6 11l7 11l6 12l7 11l6 11l7 11l6 11l6 11l6 11l5 10l6 10l5 10l5 10l4 9l5 10l4 9l3 8l4 8l3 8l3 8M502 194l-8 7l-8 6l-7 6l-6 6l-6 5l-6 5l-4 5l-5 4l-3 4l-3 4l-3 4l-1 4l-2 3l0 4l0 3M502 194l7 12l6 11l7 12l6 11l6 11l7 12l6 11l6 11l6 11l6 10l5 11l5 10l5 10l5 10l5 9l4 10l4 8l3 9l4 8l3 8M495 192l-8 6l-7 6l-7 6l-6 5l-5 5l-5 5l-4 5l-4 4l-3 4l-3 4l-2 3l-1 4l-1 3l0 4l1 7M495 192l6 11l6 12l7 12l6 11l7 12l6 11l6 11l6 12l6 11l6 10l5 11l6 11l5 10l5 10l5 10l4 9l4 9l4 9l3 9l4 8M488 189l-7 6l-7 6l-6 5l-6 6l-5 4l-4 5l-4 4l-3 5l-3 3l-2 4l-1 4l-1 3l0 4l0 7M488 189l6 12l6 12l6 11l7 12l6 12l6 11l6 12l6 11l6 11l6 11l6 11l5 11l6 10l5 11l4 10l5 9l4 10l4 9l4 9l3 9M481 186l-6 6l-7 6l-5 5l-5 5l-5 5l-4 4l-3 4l-3 4l-2 4l-1 4l-1 3l0 4l0 6M481 186l6 12l6 12l6 12l6 11l6 12l7 12l6 12l6 11l6 11l6 12l5 11l6 11l5 11l5 10l5 10l5 11l4 9l5 10l3 9l4 9M475 184l-6 5l-6 5l-5 5l-5 5l-4 5l-3 4l-3 4l-2 4l-1 4l-1 3l0 4l0 5M475 184l6 11l5 12l6 12l6 12l6 12l6 11l6 12l6 12l6 12l6 11l6 11l5 12l6 11l5 10l5 11l5 10l4 10l5 10l4 10l4 9M469 180l-6 6l-5 5l-4 5l-4 4l-4 5l-3 4l-2 4l-1 3l-1 4l-1 4l0 5M469 180l6 12l5 12l6 12l5 12l6 12l6 12l6 12l6 12l6 11l5 12l6 12l6 11l5 11l5 11l6 11l5 11l4 10l5 10l4 10l4 9M464 177l-5 5l-5 5l-4 5l-4 4l-3 5l-2 4l-1 3l-2 4l0 4l0 4M464 177l5 12l5 12l5 12l6 12l5 12l6 12l6 12l6 12l5 12l6 12l6 12l5 11l6 12l5 11l5 11l5 11l5 10l5 11l4 10l4 10M459 174l-5 5l-4 5l-4 4l-3 4l-2 4l-2 4l-1 4l0 4l0 4M459 174l4 12l5 12l5 12l6 12l5 12l6 12l5 12l6 12l5 12l6 12l6 12l5 12l6 12l5 11l5 12l5 11l5 11l5 10l4 11l4 10M454 171l-4 4l-4 5l-3 4l-2 4l-2 4l-1 4l0 4l0 4M454 171l5 11l4 12l5 12l5 13l5 12l5 12l6 12l5 12l6 13l5 12l6 12l5 12l5 12l6 11l5 12l5 11l5 11l5 11l4 11l5 10M450 167l-4 5l-3 4l-2 4l-2 4l-1 4l-1 4l0 4M450 167l4 12l4 12l5 12l4 12l5 12l5 13l5 12l6 12l5 13l5 12l6 12l5 12l6 12l5 12l5 12l5 11l5 12l5 11l4 11l5 11M447 164l-4 4l-2 4l-2 4l-1 4l-1 4l0 4l0 8M447 164l3 11l4 12l4 12l4 13l5 12l5 12l5 13l5 12l5 12l5 13l5 12l5 12l6 13l5 12l5 12l5 11l5 12l5 11l5 12l4 11M443 160l-2 4l-2 4l-1 4l-1 4l0 4l0 7M443 160l3 12l4 12l4 12l4 12l4 12l4 13l5 12l5 12l5 13l5 12l5 13l5 12l5 13l5 12l5 12l5 12l5 12l5 12l5 11l4 11M441 156l-2 4l-2 5l0 3l-1 4l1 7M441 156l2 12l3 12l4 12l3 12l4 12l4 13l5 12l4 13l5 12l5 13l5 13l5 12l5 13l5 12l5 12l5 13l5 12l4 12l5 11l5 12M439 153l-2 4l-1 4l0 3l0 7M439 153l2 11l2 12l3 12l4 12l3 13l4 12l4 12l4 13l5 13l4 12l5 13l5 13l5 12l5 13l4 12l5 13l5 12l5 12l5 12l4 12M437 149l-1 4l0 4l0 6M437 149l2 11l2 12l2 12l3 12l3 13l4 12l4 13l4 12l4 13l4 13l5 12l4 13l5 13l5 13l4 12l5 13l5 12l4 13l5 12l5 12M436 145l0 4l0 6M436 145l1 12l2 11l2 12l2 12l3 13l3 12l4 13l3 12l4 13l4 13l4 12l5 13l4 13l5 13l4 13l5 12l5 13l4 13l5 12l4 12M435 141l1 6M435 141l1 12l1 12l2 11l2 12l2 13l3 12l3 12l3 13l4 13l4 13l4 12l4 13l4 13l4 13l5 13l4 13l5 13l4 12l5 13l4 12M435 139l1 10l0 12l2 11l1 12l2 12l2 13l3 12l3 13l3 13l4 12l3 13l4 13l4 13l4 13l4 13l5 13l4 13l4 13l5 13l4 12M436 147l0 10l1 11l1 12l1 12l2 13l2 12l3 13l3 12l3 13l3 13l4 13l4 13l3 13l4 13l4 13l5 13l4 13l4 13l4 13M436 155l0 9l1 12l1 12l1 12l2 13l2 12l3 13l3 13l3 13l3 13l3 13l4 13l4 13l4 13l4 13l4 14l4 13l4 13M436 163l0 9l1 12l1 12l2 12l1 13l2 12l3 13l2 13l3 13l4 13l3 13l3 14l4 13l4 13l4 13l3 14l4 13M436 171l1 9l0 12l1 12l2 12l1 13l2 13l3 13l2 13l3 13l3 13l3 13l4 14l3 13l4 13l4 14l3 13M437 179l0 9l1 12l0 12l2 13l1 12l2 13l3 13l2 13l3 13l3 14l3 13l3 13l4 14l3 13l4 14M437 187l0 9l1 12l1 12l1 13l1 12l2 13l2 13l3 14l3 13l2 13l3 14l4 13l3 14l3 13M437 196l1 8l0 12l1 12l1 13l2 13l1 13l2 13l3 13l2 14l3 13l3 14l3 13l3 14M438 212l0 12l1 12l1 13l2 13l1 13l2 13l2 14l3 13l3 14l2 13l3 14M438 220l1 12l0 12l1 13l2 13l1 13l2 14l2 13l3 14l2 14l3 13M438 229l1 11l0 12l1 13l2 14l1 13l2 13l2 14l2 14l3 13M439 237l0 11l1 13l1 13l1 13l1 13l2 14l2 13l2 14M439 246l0 10l1 13l1 13l1 13l1 14l2 13l2 14M439 255l1 9l0 13l1 13l1 14l1 13l2 14M440 263l0 9l0 13l1 13l1 14l1 14M440 281l0 12l1 14l1 13M440 290l1 11l0 14M441 299l0 11" fill="none" stroke="#095209" stroke-width="0.5"/><path d="M435 140 L435.2 170 L436.6 195 L439.5 216 L447.3 229.5 L445.5 256 L452 300 L470 372 L470 372C471.7 373.2 473.8 375.9 480 379.4C486.2 382.9 498.3 389.4 507.4 393C516.5 396.6 524.7 399.2 534.7 401.3C544.7 403.4 557.6 405.2 567.6 405.4C577.6 405.6 585.9 404.7 595 402.6C604.1 400.5 614.1 397.3 622.3 393C630.5 388.7 637.8 383 644.2 376.6C650.6 370.2 656 362.9 660.6 354.7C665.2 346.5 668.6 336.5 671.6 327.4C674.6 318.3 674.1 313.4 678.4 300C682.7 286.6 690 268.6 697.5 247.3C705 226 718.6 186.6 723.3 172C727.9 157.4 725 162 725.4 160 L724.5 146.2 L719.8 136.6 L711.6 127.2 L700.2 118.3 L685.9 110.1 L669 102.7 L649.8 96.5 L629 91.5 L607 87.9 L584.3 85.7 L561.6 85 L539.3 85.9 L518 88.2 L498.2 92 L480.5 97.2 L465.3 103.5 L452.9 111 L443.6 119.3 L437.7 128.2 L435.3 137.7Z" fill="none" stroke="#0c6a0c" stroke-width="2"/></g>
<ellipse cx="580.5" cy="146.8" rx="145.5" ry="61.2" transform="rotate(3.59 580.5 146.8)" fill="#f0f400"/>
<g clip-path="url(#ce)"><path d="M435 139l1-7l3-6l4-7l7-6l8-5l9-5l11-5l12-4l13-3l14-3l16-2l15-1l16 0l16 1l17 1l16 2l15 2l16 4l14 4l13 5l12 5l11 5l9 7l8 6l7 7l4 6l3 7l1 7M435 143l1-7l3-6l4-7l7-6l8-6l9-5l11-4l12-4l13-4l14-2l15-2l16-1l16 0l16 0l16 1l16 2l16 3l14 4l15 4l13 5l12 5l11 6l9 6l8 6l6 7l5 7l2 7l1 7M436 147l0-7l3-7l5-6l6-6l8-6l9-5l11-5l12-4l13-3l14-3l15-1l15-1l16-1l16 1l16 1l16 2l16 3l14 4l15 4l13 5l12 5l10 6l10 6l8 7l6 6l4 7l3 7l1 8M436 151l1-7l2-7l5-6l6-6l8-6l9-5l10-5l12-4l13-3l15-3l14-2l16-1l15 0l16 0l16 2l16 2l16 3l14 3l14 5l14 5l11 5l11 6l9 6l8 7l6 7l5 7l2 7l1 7M436 155l1-7l2-7l5-6l6-7l8-6l9-5l10-4l12-5l13-3l14-2l15-2l15-1l16-1l16 1l16 1l15 3l16 3l14 3l14 5l13 4l12 6l11 6l9 6l8 7l6 7l4 7l3 8l1 7M436 159l1-7l3-7l4-7l6-6l8-6l9-5l10-5l12-4l13-3l14-3l14-2l16-1l15 0l16 1l16 1l16 2l15 3l14 4l14 4l13 5l12 6l10 6l10 7l7 6l6 7l5 8l2 7l1 7M436 163l1-7l3-7l4-7l6-6l8-6l9-5l10-5l12-4l13-4l14-2l14-2l15-1l16 0l15 0l16 2l16 2l15 3l14 4l14 4l13 5l12 6l10 6l9 7l8 7l6 7l4 7l3 8l1 7M436 167l1-7l3-7l4-7l6-6l8-6l9-6l10-5l12-4l13-3l13-3l15-2l15-1l15 0l16 1l15 1l16 3l15 3l14 4l14 4l13 5l11 6l11 6l9 7l7 7l6 7l5 8l2 7l1 7M436 171l1-7l3-7l4-7l6-7l8-6l9-5l10-5l12-4l12-3l14-3l14-2l15-1l16 0l15 1l16 1l15 2l15 4l14 3l14 5l13 5l11 6l11 6l9 7l7 7l6 7l4 8l3 7l1 8M437 175l0-7l3-8l4-6l6-7l8-6l9-5l10-5l11-4l13-4l14-3l14-1l15-1l15 0l15 0l16 2l15 2l15 3l14 4l14 5l12 5l12 6l10 6l9 7l8 7l6 8l4 7l2 8l1 7M437 179l1-7l2-8l4-7l6-6l8-6l9-6l10-5l11-4l13-3l13-3l14-2l15-1l15 0l16 1l15 1l15 3l15 3l14 4l14 5l12 5l12 6l10 6l9 7l7 8l6 7l4 8l3 7l1 8M437 183l1-7l2-8l4-7l6-6l8-6l9-6l10-5l11-4l13-4l13-2l14-2l15-1l15 0l15 0l15 2l15 3l15 3l14 4l14 5l12 5l11 6l11 7l8 6l8 8l6 7l4 8l2 8l1 7M437 187l1-7l2-8l5-7l5-7l8-6l9-5l10-5l11-5l12-3l14-3l14-2l14-1l15 0l15 1l16 2l15 2l14 4l14 4l13 4l13 6l11 6l10 7l9 7l7 7l6 8l4 7l3 8l1 8M437 191l1-7l3-8l4-7l5-7l8-6l9-6l10-5l11-4l12-3l13-3l14-2l15-1l15 0l15 1l15 1l15 3l14 3l14 4l13 5l13 6l11 6l10 7l9 7l7 7l6 8l4 8l2 8l1 7M437 196l1-8l3-8l4-7l6-7l7-6l8-6l10-5l12-4l12-4l13-3l14-1l14-1l15 0l15 0l15 2l15 3l14 3l14 4l13 5l12 6l12 6l10 7l8 7l8 7l5 8l4 8l3 8l1 8M437 200l1-8l3-8l4-7l6-7l7-6l8-6l10-5l11-5l13-3l13-3l13-2l15-1l14 0l15 1l15 2l15 2l14 4l14 4l13 5l12 6l11 6l10 7l9 7l7 7l6 8l4 8l2 8l1 8M438 204l0-8l3-8l4-7l6-7l7-7l8-5l10-6l11-4l12-3l13-3l14-2l14-1l15 0l15 1l14 1l15 3l14 3l14 5l13 5l12 5l11 7l10 7l9 7l7 8l5 7l4 9l3 8l1 8M438 208l1-8l2-8l4-7l6-7l7-7l8-6l10-5l11-4l12-4l13-3l14-2l14 0l14-1l15 1l15 2l14 3l14 3l14 4l13 6l12 5l11 7l10 7l8 7l7 8l6 8l4 8l2 8l1 8M438 212l1-8l2-8l4-7l6-7l7-7l8-6l10-5l11-5l12-3l13-3l13-2l14-1l15 0l14 1l15 2l14 2l14 4l14 4l13 5l12 6l11 7l9 7l9 7l7 8l5 8l4 8l3 8l1 9M438 216l1-8l2-8l4-7l6-7l7-7l8-6l10-5l11-5l12-3l12-3l14-2l14-1l14 0l15 1l14 1l14 3l14 4l14 4l13 5l11 6l11 6l10 7l8 8l7 8l6 8l4 8l2 9l1 8M438 220l1-8l2-8l4-7l6-8l7-6l8-6l10-6l11-4l11-4l13-3l13-2l14-1l15 0l14 1l14 2l15 3l14 3l13 5l12 5l12 6l11 6l10 7l8 8l7 8l6 8l4 8l2 9l1 8M438 225l1-9l3-8l4-7l5-8l7-6l8-6l10-6l11-4l11-4l13-3l13-2l14-1l14 0l14 1l15 2l14 2l14 4l13 4l12 6l12 6l11 6l9 7l9 8l7 8l5 8l4 9l2 8l1 9M438 229l1-8l3-9l4-7l5-8l7-6l8-7l10-5l10-5l12-3l12-3l14-2l13-1l14 0l15 0l14 2l14 3l14 4l13 4l12 5l12 6l11 7l9 7l8 8l7 8l6 8l4 9l2 8l1 9M439 233l0-8l3-9l4-7l5-8l7-7l8-6l10-5l10-5l12-4l12-3l13-2l14-1l14 0l14 1l14 2l14 3l14 3l13 5l12 5l12 6l10 7l10 7l8 8l7 8l5 8l4 9l2 9l1 8M439 237l1-8l2-8l4-8l5-8l7-7l8-6l10-5l10-5l11-4l13-3l13-2l13-1l14 0l14 1l14 2l14 2l14 4l13 5l12 5l12 6l10 7l9 7l9 8l6 8l6 9l4 8l2 9l1 9M439 242l1-9l2-8l4-8l5-8l7-7l8-6l9-6l11-4l11-4l12-3l13-2l14-1l14-1l14 1l14 2l13 3l14 4l13 4l12 6l11 6l11 7l9 7l8 8l7 8l5 9l4 8l2 9l1 9M439 246l1-9l2-8l4-8l5-8l7-7l8-6l9-6l11-5l11-4l12-3l13-2l13-1l14 0l14 1l14 2l13 3l14 3l13 5l12 5l11 7l10 6l10 8l8 8l7 8l5 9l4 8l2 9l1 9M439 250l1-8l2-9l4-8l5-8l7-7l8-6l9-6l11-5l11-4l12-3l13-2l13-1l13 0l14 1l14 1l14 3l13 4l13 5l12 5l11 6l10 7l9 8l8 8l7 8l5 9l4 9l3 9l0 8M439 255l1-9l2-9l4-8l5-8l7-7l8-6l9-6l10-5l12-4l12-3l12-2l13-1l14-1l14 1l13 2l14 3l13 4l13 4l12 6l11 6l10 7l9 7l8 9l7 8l5 9l4 9l2 9l1 9M439 259l1-9l3-9l3-8l5-8l7-7l8-6l9-6l10-5l11-4l12-3l13-3l13-1l13 0l14 1l13 2l14 2l13 4l13 5l11 5l12 7l10 7l9 7l8 8l6 9l5 9l4 9l3 9l0 9M440 263l0-9l3-8l3-9l6-8l6-7l8-6l9-6l10-5l11-4l12-4l12-2l13-1l14 0l13 0l14 2l13 3l13 4l13 5l11 5l11 6l10 7l9 8l8 8l7 9l5 9l4 9l2 9l1 9M440 268l0-9l3-9l3-9l6-7l6-8l8-6l9-6l10-5l11-5l12-3l12-2l13-1l13-1l14 1l13 2l13 3l13 4l13 4l11 6l11 6l10 7l9 8l8 8l6 9l6 9l3 9l3 9l0 9M440 272l1-9l2-9l4-8l5-8l6-8l8-7l9-5l10-6l11-4l11-3l13-3l12-1l14 0l13 1l13 2l13 2l13 4l12 5l12 5l11 7l10 7l9 8l8 8l6 9l5 9l4 9l2 9l1 9M440 277l1-10l2-9l4-8l5-8l6-8l8-7l9-6l9-5l11-4l12-3l12-3l13-1l13 0l13 0l13 2l13 3l13 4l12 5l12 5l11 7l10 7l9 7l7 9l7 9l5 9l3 9l3 9l0 10M440 281l1-9l2-9l4-9l5-8l6-8l8-7l8-6l10-5l11-4l12-4l12-2l12-1l13-1l13 1l14 2l13 3l12 3l12 5l12 6l11 6l10 7l8 8l8 9l6 8l5 9l4 10l2 9l1 10M440 285l1-9l2-9l4-9l5-8l6-8l8-6l8-7l10-5l11-4l11-4l12-2l13-2l13 0l13 1l13 1l13 3l12 4l12 5l12 5l11 7l9 7l9 8l8 8l6 9l5 9l3 10l3 9l0 10M440 290l1-10l2-9l4-8l5-9l6-7l8-7l8-7l10-5l11-5l11-3l12-3l12-1l13 0l13 0l13 2l13 3l12 4l12 4l12 6l10 7l10 7l9 8l7 8l6 9l5 9l4 10l2 9l1 10M440 294l1-9l2-9l4-9l5-9l6-7l8-7l8-7l10-5l10-5l12-3l11-3l13-1l13-1l12 1l13 2l13 2l12 4l12 5l12 6l10 6l10 7l8 8l8 9l6 9l5 9l4 10l2 9l0 10M441 299l0-10l2-9l4-9l5-8l6-8l8-7l8-7l10-5l10-5l11-4l12-2l12-2l13 0l13 1l13 1l12 3l13 4l11 5l12 5l10 7l10 7l8 8l7 9l7 9l5 9l3 10l2 9l1 10M441 303l0-9l3-10l3-9l5-8l6-8l7-7l9-7l9-5l11-5l11-4l12-2l12-2l12 0l13 0l13 2l12 3l13 3l11 5l11 6l11 6l9 8l9 8l7 8l6 9l5 10l4 9l2 10l1 10M441 308l1-10l2-9l3-9l5-9l6-8l7-7l9-7l9-5l11-5l11-4l11-3l12-1l13-1l12 1l13 2l13 2l12 4l11 5l11 6l11 6l9 7l8 8l8 9l6 9l5 10l3 9l2 10l1 10M441 299l0 6M440 290l1 7l0 4M440 281l0 8l1 4l1 5M440 280l1 5l0 5l1 4M440 272l0 5l1 5l1 4l1 5M440 263l0 6l1 4l1 5l1 5l1 4M439 255l1 6l0 4l1 5l1 5l2 4l1 5M439 246l0 7l1 4l1 5l1 5l1 4l2 5l2 4M439 237l0 8l1 4l0 5l1 5l2 4l1 5l2 5l2 4M438 229l1 8l0 4l1 5l1 5l1 4l2 5l2 5l2 4l2 5M438 229l1 5l1 4l1 5l1 5l2 4l1 5l2 4l3 5l2 5M438 220l1 6l0 4l1 5l2 5l1 4l2 5l2 5l2 4l3 5l2 5M438 212l0 6l1 5l1 4l1 5l2 5l1 4l2 5l3 5l2 4l3 5l3 5M438 204l0 6l1 5l1 4l1 5l1 5l2 5l2 4l2 5l3 5l2 4l3 5l3 5M437 196l1 6l0 5l1 5l1 4l2 5l1 5l2 4l3 5l2 5l3 5l3 4l3 5l3 5M437 187l0 7l1 5l1 5l1 5l1 4l2 5l2 5l2 4l3 5l2 5l3 5l3 5l3 4l4 5M437 179l0 7l1 5l0 5l1 5l2 5l2 4l1 5l3 5l2 5l3 4l2 5l4 5l3 5l3 5l4 5M436 171l1 8l0 5l1 4l1 5l1 5l2 5l2 4l2 5l2 5l3 5l3 5l3 4l3 5l4 5l3 5l4 5M436 171l1 5l1 5l1 5l1 4l2 5l1 5l3 5l2 4l3 5l2 5l3 5l4 5l3 5l4 5l3 5l4 5M436 163l1 5l0 5l1 5l2 5l1 5l2 4l2 5l2 5l3 5l3 4l3 5l3 5l3 5l4 5l4 5l4 6l4 5M436 155l0 6l1 4l1 5l1 5l2 5l2 5l2 5l2 4l3 5l2 5l3 5l4 5l3 5l3 5l4 5l4 5l4 5l4 6M436 147l0 6l1 5l1 5l1 5l1 4l2 5l2 5l2 5l3 5l3 4l3 5l3 5l3 5l4 5l4 5l3 6l4 5l5 5l4 6M435 139l1 6l0 5l1 5l1 5l2 5l2 5l2 5l2 4l3 5l2 5l3 5l3 5l4 5l3 5l4 5l4 5l4 5l4 6l4 5l5 6M435 138l1 5l1 5l1 5l2 4l1 5l2 5l3 5l2 5l3 5l3 5l3 4l3 5l4 5l4 6l3 5l4 5l5 5l4 6l4 6l5 5M435 138l1 9M436 135l0 5l2 5l1 5l2 5l2 5l2 4l3 5l2 5l3 5l3 5l4 5l3 5l4 5l4 5l4 6l4 5l4 6l5 5l4 6l5 6M436 135l0 10l0 10M436 133l1 5l2 4l1 5l2 5l3 5l2 5l3 5l3 5l3 5l3 5l4 5l4 5l3 5l4 5l5 6l4 5l4 6l5 6l4 5l5 6M436 133l0 10l0 10l0 10l0 8M437 130l1 5l2 5l2 5l2 5l3 5l2 4l3 5l3 5l4 5l3 5l4 6l4 5l4 5l4 5l4 6l5 5l4 6l5 6l4 6l5 6M437 130l-1 10l0 10l0 11l0 10l1 8M438 128l2 5l2 4l2 5l2 5l3 5l3 5l3 5l3 5l4 5l4 5l3 5l4 6l5 5l4 6l4 5l5 6l4 6l5 6l4 6l5 6M438 128l-1 10l0 10l0 10l0 10l0 11l0 8M439 125l2 5l2 5l3 5l3 5l2 5l4 5l3 5l3 5l4 5l4 5l4 5l4 6l4 5l5 6l4 6l5 5l4 6l5 6l5 7l5 6M439 125l-1 10l0 10l-1 10l0 10l0 11l0 10l0 10M441 123l2 5l2 5l3 5l3 4l3 5l3 5l4 6l4 5l4 5l4 5l4 5l4 6l4 6l5 5l5 6l4 6l5 6l5 6l4 7l5 6M441 123l-1 10l-1 9l-1 11l0 10l-1 10l0 11l0 10l1 10M443 120l2 5l3 5l3 5l3 5l3 5l4 5l3 5l4 6l4 5l4 5l5 6l4 5l5 6l4 6l5 6l5 6l4 6l5 6l5 7l4 6M443 120l-2 10l-1 10l-1 10l-1 10l0 10l0 11l0 10l0 11l0 10M445 118l2 5l3 5l3 5l4 5l3 5l4 5l4 5l4 6l4 5l4 5l5 6l4 6l5 5l4 6l5 6l5 7l5 6l5 6l4 7l5 7M445 118l-2 10l-1 9l-2 10l0 10l-1 11l-1 10l0 10l0 11l0 11l0 10l0 9M447 116l3 5l3 5l3 5l4 5l3 5l4 5l4 5l5 6l4 5l4 6l5 5l4 6l5 6l5 6l5 6l5 7l4 6l5 7l5 7l5 7M447 116l-2 9l-2 10l-1 10l-1 10l-1 10l-1 10l0 11l-1 10l0 11l0 11l0 11l1 8M449 114l4 5l3 5l3 5l4 5l4 5l4 5l4 6l5 5l4 6l5 5l4 6l5 6l5 6l4 6l5 6l5 7l5 6l5 7l5 7l4 7M449 114l-2 9l-2 10l-1 9l-2 10l-1 10l-1 10l0 11l-1 10l0 11l0 11l0 11l0 11l0 9M452 111l3 6l4 5l4 5l4 5l4 5l4 5l4 6l5 5l4 6l5 6l5 6l4 6l5 6l5 6l5 7l5 6l5 7l5 7l4 7l5 7M452 111l-2 10l-2 9l-2 10l-2 10l-1 10l-1 10l-1 10l-1 10l-1 11l0 11l0 11l0 11l0 11l0 10M455 109l4 5l3 6l4 5l4 5l5 5l4 6l4 5l5 6l5 6l4 5l5 6l5 7l5 6l5 6l5 7l5 7l4 7l5 7l5 7l5 7M455 109l-2 10l-3 9l-2 10l-2 9l-1 10l-2 10l-1 10l-1 11l-1 10l0 11l0 10l-1 11l0 11l0 12l1 10M458 107l4 5l4 6l4 5l4 5l5 6l4 5l5 6l4 5l5 6l5 6l5 6l5 7l5 6l5 7l5 6l4 7l5 7l5 8l5 7l4 8M458 107l-3 10l-2 9l-2 9l-2 10l-2 10l-2 9l-1 11l-1 10l-1 10l-1 11l-1 10l0 11l0 11l0 11l0 12l0 11l0 9M462 105l4 6l4 5l4 5l4 6l5 5l4 6l5 5l5 6l5 6l5 6l5 6l5 7l5 6l5 7l4 7l5 7l5 7l5 8l5 7l4 8M462 105l-3 9l-3 10l-3 9l-2 9l-2 10l-2 10l-1 10l-2 10l-1 10l-1 11l-1 10l0 11l-1 11l0 11l0 11l0 12l0 11l0 10M465 104l4 5l5 5l4 5l5 6l4 6l5 5l5 6l5 6l5 6l4 6l5 7l5 6l5 7l5 7l5 7l5 7l5 7l5 8l4 8l5 8M465 104l-3 8l-3 10l-3 9l-2 9l-3 10l-2 9l-1 10l-2 10l-1 11l-2 10l0 10l-1 11l-1 11l0 11l-1 11l0 11l0 12l0 12l1 10M469 102l4 5l5 5l4 6l5 5l5 6l5 6l4 6l5 6l5 6l5 6l5 7l5 7l5 6l5 7l5 8l5 7l5 7l5 8l4 8l5 8M469 102l-3 9l-4 9l-3 9l-2 9l-3 9l-2 10l-2 10l-2 10l-2 10l-1 10l-1 10l-1 11l-1 11l0 11l-1 11l0 11l0 11l0 12l0 12l0 11M473 100l4 5l5 6l5 5l4 6l5 6l5 6l5 6l5 6l5 6l5 7l5 6l6 7l5 7l4 7l5 8l5 7l5 8l4 8l5 8l4 8M473 100l-4 9l-3 9l-3 9l-3 9l-3 9l-2 10l-3 9l-2 10l-1 10l-2 10l-1 11l-2 10l-1 11l0 11l-1 11l-1 11l0 11l0 12l0 11l0 12M477 98l5 6l5 5l4 6l5 6l5 6l5 6l5 6l5 6l5 7l5 6l6 7l5 7l5 7l5 7l4 8l5 7l5 8l4 8l5 9l4 8M477 98l-4 9l-3 9l-4 9l-3 9l-3 9l-3 9l-2 10l-2 10l-2 10l-2 10l-2 10l-1 10l-1 11l-1 11l-1 10l-1 11l0 12l0 11l-1 12l0 11M482 97l4 5l5 6l5 6l5 6l5 6l5 6l5 6l5 6l6 7l5 7l5 7l5 7l5 7l5 7l4 8l5 8l5 8l4 8l4 9l4 8M482 97l-5 8l-3 9l-4 9l-3 9l-4 9l-2 9l-3 10l-3 9l-2 10l-2 10l-1 10l-2 10l-1 11l-2 10l-1 11l0 11l-1 11l-1 12l0 11l0 12M486 95l5 6l5 6l5 6l5 5l5 7l5 6l5 6l6 7l5 7l5 6l5 7l5 8l5 7l5 8l4 8l5 8l5 8l4 8l4 9l4 9M486 95l-4 9l-4 8l-4 9l-4 9l-3 9l-3 9l-3 10l-3 9l-2 10l-2 10l-2 9l-2 11l-2 10l-1 10l-1 11l-1 11l-1 11l-1 11l0 12l-1 11M491 94l5 6l5 5l5 6l5 7l5 6l5 6l6 7l5 6l5 7l5 7l5 7l5 8l5 7l5 8l5 8l4 8l4 9l5 8l4 9l4 9M491 94l-5 8l-4 9l-4 8l-4 9l-3 9l-4 9l-3 9l-3 10l-2 9l-3 10l-2 10l-2 10l-1 10l-2 11l-1 10l-2 11l-1 11l-1 11l0 11l-1 12M496 93l5 5l5 6l5 6l5 7l6 6l5 7l5 6l5 7l5 7l5 7l5 8l5 7l5 8l5 8l5 8l4 8l4 9l4 8l4 9l4 10M496 93l-5 8l-4 8l-5 9l-4 9l-3 8l-4 9l-3 9l-3 10l-3 9l-3 10l-2 9l-2 10l-2 10l-2 11l-1 10l-2 11l-1 11l-1 11l-1 11l-1 11M501 91l5 6l5 6l5 7l6 6l5 6l5 7l5 7l6 7l5 7l5 7l5 8l5 8l4 7l5 9l5 8l4 8l4 9l4 9l4 9l3 9M501 91l-5 9l-5 8l-4 8l-4 9l-4 9l-4 8l-4 9l-3 10l-3 9l-3 9l-2 10l-3 10l-2 10l-2 10l-1 10l-2 11l-1 11l-2 10l-1 12l-1 11M506 90l5 6l5 7l6 6l5 6l5 7l6 7l5 7l5 7l5 7l5 8l5 7l5 8l5 8l4 8l5 9l4 8l4 9l4 9l3 10l4 9M506 90l-5 8l-5 9l-5 8l-4 8l-4 9l-4 9l-4 9l-3 9l-3 9l-3 9l-3 10l-3 9l-2 10l-2 10l-2 11l-2 10l-1 11l-2 10l-1 11l-1 11M511 89l6 6l5 7l5 6l6 7l5 7l5 6l5 8l6 7l5 7l5 8l4 8l5 8l5 8l4 8l5 9l4 9l4 9l3 9l4 9l3 10M511 89l-5 8l-5 8l-5 9l-5 8l-4 9l-4 8l-4 9l-3 9l-4 9l-3 9l-3 10l-3 9l-2 10l-2 10l-3 10l-2 10l-1 11l-2 10l-1 11l-2 11M517 88l5 7l5 6l6 7l5 6l5 7l6 7l5 8l5 7l5 8l5 7l5 8l4 9l5 8l4 8l4 9l4 9l4 9l4 10l3 9l3 10M517 88l-6 8l-5 8l-5 9l-5 8l-4 8l-5 9l-4 8l-3 9l-4 9l-3 9l-4 9l-2 10l-3 9l-3 10l-2 10l-2 10l-2 11l-2 10l-1 11l-2 11M522 88l6 6l5 7l5 6l6 7l5 7l5 7l5 8l6 7l4 8l5 8l5 8l5 8l4 9l4 9l4 9l4 9l4 9l3 10l3 9l3 10M522 88l-5 7l-6 8l-5 8l-5 9l-5 8l-4 8l-4 9l-4 8l-4 9l-4 9l-3 9l-3 10l-3 9l-3 10l-2 10l-2 10l-2 10l-2 10l-2 11l-2 11M528 87l5 6l6 7l5 7l5 7l6 7l5 7l5 8l5 8l5 8l5 8l4 8l5 9l4 8l4 9l4 9l4 10l3 9l3 10l3 10l3 10M528 87l-6 8l-6 8l-5 7l-5 8l-5 9l-4 8l-5 8l-4 9l-4 9l-4 8l-3 9l-4 10l-3 9l-2 10l-3 9l-3 10l-2 10l-2 11l-2 10l-2 11M533 86l6 7l5 7l6 7l5 7l5 7l6 8l5 7l5 8l4 8l5 9l5 8l4 9l4 9l4 9l4 9l3 9l4 10l3 10l2 10l3 10M533 86l-5 8l-6 8l-6 8l-5 8l-5 8l-5 8l-4 8l-5 8l-4 9l-4 9l-3 9l-4 9l-3 9l-3 9l-3 10l-3 10l-2 10l-2 10l-2 10l-2 11M539 86l6 7l5 7l6 7l5 7l5 7l5 8l5 8l5 8l5 8l4 9l5 8l4 9l4 9l4 9l3 10l4 9l3 10l3 10l2 10l3 11M539 86l-6 7l-6 8l-5 8l-6 8l-5 8l-5 8l-5 8l-4 8l-4 9l-4 8l-4 9l-4 9l-3 9l-4 9l-3 10l-2 9l-3 10l-2 10l-3 10l-2 11M545 86l6 6l5 7l5 8l6 7l5 8l5 8l5 8l5 8l4 8l5 9l4 8l4 9l4 10l4 9l3 10l3 9l3 10l3 11l2 10l2 10M545 86l-6 7l-6 8l-6 7l-5 8l-6 8l-5 8l-5 8l-4 8l-5 8l-4 9l-4 8l-4 9l-4 9l-3 9l-3 10l-3 9l-3 10l-2 10l-3 10l-2 10M551 85l6 7l5 7l5 8l5 7l6 8l5 8l4 8l5 9l5 8l4 9l4 9l4 9l4 9l3 10l3 10l3 10l3 10l3 10l2 11l2 10M551 85l-6 8l-6 7l-6 8l-6 7l-5 8l-6 8l-5 8l-5 8l-4 8l-5 8l-4 9l-4 9l-4 9l-3 9l-3 9l-4 9l-3 10l-2 9l-3 10l-2 10M557 85l6 7l5 8l5 7l5 8l5 8l5 8l5 8l5 9l4 8l4 9l4 9l4 10l3 9l4 10l3 10l3 10l2 10l2 11l2 10l2 11M557 85l-6 7l-7 8l-6 7l-5 8l-6 7l-6 8l-5 8l-5 8l-4 8l-5 8l-4 9l-5 8l-3 9l-4 9l-4 9l-3 9l-3 9l-3 10l-3 10l-2 10M563 85l5 7l6 8l5 8l5 7l5 8l5 9l4 8l5 9l4 9l4 9l4 9l4 10l3 9l3 10l3 10l3 10l2 11l2 10l2 11l1 11M563 85l-6 7l-7 8l-6 7l-6 7l-6 8l-5 8l-6 7l-5 8l-5 8l-4 8l-5 8l-4 9l-4 8l-4 9l-4 9l-3 9l-3 9l-4 10l-2 10l-3 9M569 85l5 8l6 7l5 8l5 8l5 8l4 9l5 8l4 9l4 9l4 9l4 10l3 9l4 10l2 10l3 10l3 11l2 10l1 11l2 11l1 11M569 85l-6 7l-7 7l-6 8l-6 7l-6 8l-6 7l-5 8l-6 7l-5 8l-5 8l-4 8l-5 9l-4 8l-4 9l-4 9l-3 8l-4 10l-3 9l-3 9l-3 10M575 85l6 8l5 8l5 8l5 8l4 8l5 9l4 9l4 9l4 9l4 9l4 10l3 9l3 10l3 11l2 10l2 10l2 11l2 11l1 11l1 11M575 85l-7 7l-6 7l-6 8l-7 7l-6 7l-5 8l-6 7l-5 8l-6 8l-5 7l-4 8l-5 9l-4 8l-5 8l-3 9l-4 9l-4 9l-3 9l-3 9l-3 10M581 86l6 7l5 8l5 8l4 9l5 8l4 9l5 9l4 9l3 9l4 10l3 10l3 10l3 10l3 10l2 10l2 11l2 11l1 11l1 11l1 12M581 86l-7 7l-6 7l-7 7l-6 7l-6 7l-6 7l-6 8l-5 7l-5 8l-6 8l-5 8l-4 8l-5 8l-4 8l-4 9l-4 8l-4 9l-3 9l-4 9l-3 10M587 86l6 8l5 8l4 8l5 9l5 8l4 9l4 9l4 10l3 9l4 10l3 10l3 10l2 10l3 10l2 11l1 11l2 11l1 11l1 11l0 12M587 86l-6 7l-7 7l-7 7l-6 7l-6 7l-6 7l-6 8l-6 7l-5 8l-6 7l-5 8l-4 8l-5 8l-5 8l-4 8l-4 9l-4 9l-3 9l-4 9l-3 9M593 86l6 8l4 9l5 8l5 9l4 9l4 9l4 9l4 9l3 10l3 10l3 10l3 10l2 11l2 10l2 11l2 11l1 11l1 11l0 12l1 11M593 86l-6 7l-7 7l-7 7l-6 7l-7 7l-6 7l-6 8l-5 7l-6 7l-5 8l-6 7l-5 8l-4 8l-5 8l-4 8l-4 9l-5 8l-3 9l-4 9l-3 9M599 87l5 8l5 9l5 8l4 9l4 9l4 9l4 10l4 9l3 10l3 10l3 10l2 11l2 10l2 11l2 11l1 11l1 11l1 11l0 12l0 12M599 87l-6 7l-7 7l-7 7l-7 6l-6 7l-6 7l-6 8l-6 7l-6 7l-5 7l-5 8l-6 8l-4 7l-5 8l-5 8l-4 9l-4 8l-4 9l-4 8l-3 9M606 88l4 8l5 9l4 8l5 9l4 9l4 10l3 9l3 10l3 10l3 10l3 10l2 11l2 11l2 11l1 11l1 11l1 11l0 12l0 11l0 12M606 88l-7 6l-7 7l-7 7l-7 7l-6 7l-6 7l-7 7l-5 7l-6 7l-6 7l-5 8l-5 7l-6 8l-4 8l-5 8l-4 8l-5 8l-4 8l-4 9l-3 9M611 89l5 8l5 9l4 9l4 9l4 9l4 10l3 9l3 10l3 10l3 10l2 11l2 11l2 10l1 11l1 12l1 11l0 11l0 12l0 12l0 12M611 89l-7 6l-6 7l-7 7l-7 6l-6 7l-7 7l-6 7l-6 7l-6 7l-6 7l-5 7l-5 8l-6 7l-4 8l-5 8l-5 8l-4 8l-4 8l-5 9l-3 8M617 89l5 9l4 9l4 9l4 9l4 10l4 9l3 10l3 10l2 10l3 11l2 10l1 11l2 11l1 11l1 12l1 11l0 12l0 11l-1 12l0 12M617 89l-7 7l-7 7l-6 6l-7 7l-7 7l-6 7l-6 6l-6 7l-6 7l-6 7l-6 7l-5 8l-5 7l-6 8l-4 7l-5 8l-5 8l-4 8l-4 9l-4 8M623 90l5 9l4 9l4 9l4 10l3 9l3 10l3 10l3 10l2 11l3 10l1 11l2 11l1 11l1 11l1 12l0 11l0 12l0 12l-1 12l-1 12M623 90l-7 7l-7 7l-7 6l-6 7l-7 6l-6 7l-7 7l-6 7l-6 7l-6 7l-6 7l-5 7l-5 7l-6 7l-5 8l-4 8l-5 7l-4 8l-5 9l-4 8M629 92l4 8l4 10l4 9l4 10l3 9l3 10l3 10l2 11l2 10l2 11l2 11l1 11l1 11l1 11l0 12l0 12l0 11l-1 12l0 12l-2 12M629 92l-7 6l-7 7l-7 6l-7 7l-6 6l-7 7l-6 7l-6 6l-7 7l-5 7l-6 7l-6 7l-5 7l-6 7l-5 8l-5 7l-4 8l-5 8l-4 8l-4 8M635 93l4 9l4 9l3 10l4 9l3 10l3 10l2 11l2 10l2 11l2 11l1 11l1 11l1 11l1 11l0 12l-1 12l0 12l-1 12l-1 12l-2 12M635 93l-7 6l-7 7l-7 6l-7 7l-7 6l-6 7l-7 6l-6 7l-6 7l-6 6l-6 7l-6 7l-5 7l-5 7l-6 8l-5 7l-5 8l-4 7l-5 8l-4 8M640 94l4 9l4 10l3 9l3 10l3 10l3 11l2 10l2 11l2 10l1 11l2 11l0 12l1 11l0 12l0 11l-1 12l0 12l-1 12l-2 12l-2 13M640 94l-7 6l-7 7l-7 6l-6 7l-7 6l-7 7l-6 6l-6 7l-7 6l-6 7l-6 7l-5 7l-6 6l-5 7l-6 8l-5 7l-5 7l-4 8l-5 8l-5 7M646 95l4 10l3 9l3 10l3 10l3 10l2 11l2 10l2 11l2 11l1 11l1 11l0 12l0 11l0 12l0 12l-1 12l-1 12l-1 12l-2 12l-2 12M646 95l-7 7l-7 6l-7 7l-7 6l-6 6l-7 7l-7 6l-6 7l-6 6l-6 7l-6 6l-6 7l-6 7l-5 7l-6 7l-5 7l-5 7l-5 8l-4 7l-5 8M651 97l4 9l3 10l3 10l3 10l2 11l2 10l2 11l2 11l1 11l1 11l0 11l1 12l0 11l-1 12l0 12l-1 12l-2 12l-1 12l-2 13l-2 12M651 97l-7 6l-7 7l-7 6l-6 6l-7 7l-7 6l-6 6l-6 7l-7 6l-6 7l-6 6l-6 7l-6 6l-5 7l-6 7l-5 7l-5 7l-5 8l-5 7l-4 8M656 98l4 10l3 10l3 10l2 10l2 11l2 11l2 10l1 11l1 11l1 12l0 11l0 12l0 12l-1 11l-1 12l-1 12l-2 13l-1 12l-3 12l-2 13M656 98l-6 7l-7 6l-7 6l-7 7l-7 6l-6 6l-7 7l-6 6l-6 6l-7 7l-6 6l-6 7l-5 6l-6 7l-6 7l-5 6l-5 7l-5 8l-5 7l-5 7M662 100l3 10l3 10l2 10l2 11l2 10l2 11l1 11l1 11l1 11l0 12l1 11l-1 12l0 12l-1 12l-1 12l-2 12l-2 12l-2 12l-2 13l-3 12M662 100l-7 6l-7 7l-7 6l-7 6l-6 6l-7 7l-6 6l-7 6l-6 6l-6 7l-6 6l-6 6l-6 7l-6 7l-5 6l-6 7l-5 7l-5 7l-5 7l-5 7M667 102l2 10l3 10l2 10l2 11l2 11l2 11l1 11l0 11l1 11l0 12l0 11l-1 12l-1 12l-1 12l-1 12l-2 12l-2 13l-2 12l-3 13l-3 9M667 102l-7 6l-7 6l-7 7l-6 6l-7 6l-7 6l-6 6l-7 7l-6 6l-6 6l-6 6l-6 7l-6 6l-6 6l-5 7l-6 7l-5 6l-5 7l-5 7l-5 7M671 104l3 10l2 10l2 11l2 10l2 11l1 11l1 11l0 12l0 11l0 12l0 11l-1 12l-1 12l-1 12l-2 13l-2 12l-2 12l-3 13l-3 10M671 104l-6 6l-7 6l-7 6l-6 7l-7 6l-6 6l-7 6l-6 6l-7 6l-6 6l-6 6l-6 7l-6 6l-6 6l-5 7l-6 6l-5 7l-6 7l-5 7l-5 7M676 106l2 10l3 10l1 11l2 11l1 11l1 11l1 11l0 11l0 12l-1 12l0 12l-1 12l-2 12l-1 12l-2 12l-3 12l-2 13l-3 11M676 106l-7 6l-6 6l-7 6l-6 6l-7 6l-6 7l-7 6l-6 6l-7 6l-6 6l-6 6l-6 6l-6 6l-6 6l-5 7l-6 6l-5 7l-6 6l-5 7l-5 7M681 108l2 10l2 10l1 11l1 11l1 11l1 11l0 12l0 11l0 12l-1 12l-1 12l-1 12l-2 12l-1 12l-3 12l-2 13l-3 12M681 108l-7 6l-6 6l-7 6l-7 6l-6 6l-6 6l-7 6l-6 6l-7 6l-6 6l-6 6l-6 6l-6 7l-6 6l-5 6l-6 6l-6 7l-5 6l-5 7l-5 7M685 110l2 10l1 11l2 11l1 11l0 11l1 11l0 12l0 11l-1 12l-1 12l-1 12l-2 12l-2 12l-2 12l-2 13l-3 12M685 110l-7 6l-6 6l-6 6l-7 6l-6 6l-7 6l-6 6l-6 6l-7 6l-6 6l-6 6l-6 6l-6 6l-6 6l-6 6l-5 6l-6 7l-5 6l-5 7l-5 6M689 112l2 10l1 11l1 11l1 11l0 12l0 11l0 12l0 11l-1 12l-1 12l-2 12l-2 12l-2 12l-2 13l-3 12l-3 9M689 112l-6 6l-7 6l-6 6l-6 6l-7 6l-6 6l-6 6l-7 6l-6 6l-6 6l-6 6l-6 6l-6 6l-6 6l-6 6l-5 6l-6 6l-5 6l-6 7l-5 6M693 114l1 11l1 10l1 12l1 11l0 11l0 12l-1 11l-1 12l-1 12l-1 12l-2 12l-2 13l-3 12l-2 12l-3 10M693 114l-6 6l-6 6l-7 6l-6 6l-6 6l-6 6l-7 6l-6 6l-6 6l-6 6l-6 6l-6 6l-6 5l-6 6l-6 6l-6 6l-5 6l-6 6l-5 7l-5 6M697 116l1 11l1 11l0 11l0 12l0 11l0 12l-1 11l-1 12l-1 12l-2 12l-2 13l-3 12l-2 12l-3 11M697 116l-6 6l-6 6l-7 7l-6 6l-6 6l-6 6l-6 5l-6 6l-7 6l-6 6l-6 6l-6 5l-6 6l-5 6l-6 6l-6 6l-5 6l-6 6l-5 6l-6 6M700 118l1 11l1 11l0 12l0 11l-1 12l0 12l-1 11l-2 12l-1 12l-2 12l-3 13l-2 12l-3 11M700 118l-6 7l-6 6l-6 6l-6 6l-6 6l-6 6l-6 6l-6 5l-6 6l-6 6l-6 6l-6 5l-6 6l-6 6l-6 6l-5 6l-6 5l-5 6l-6 6l-5 7M704 121l0 11l1 11l-1 11l0 12l-1 12l-1 11l-1 12l-2 12l-1 12l-3 13l-2 12l-3 12M704 121l-6 6l-6 6l-6 6l-6 6l-6 6l-6 6l-6 6l-6 6l-6 5l-6 6l-6 6l-6 6l-5 5l-6 6l-6 6l-6 5l-5 6l-6 6l-5 6l-5 6M707 123l0 11l0 12l0 11l-1 12l-1 11l-1 12l-2 12l-2 12l-2 13l-2 12l-3 12M707 123l-6 6l-6 6l-5 7l-6 6l-6 6l-6 6l-6 5l-6 6l-6 6l-5 5l-6 6l-6 6l-6 5l-6 6l-6 6l-5 5l-6 6l-5 6l-6 6l-5 6M710 125l0 12l-1 11l0 12l-1 11l-1 12l-2 12l-2 12l-2 12l-2 13l-3 12M710 125l-6 7l-5 6l-6 6l-6 6l-5 6l-6 6l-6 6l-6 6l-6 5l-5 6l-6 5l-6 6l-6 6l-6 5l-5 6l-6 5l-5 6l-6 6l-5 5l-6 6M712 128l0 11l0 12l-1 11l-2 12l-1 12l-2 12l-2 12l-2 12l-3 13l-3 9M712 128l-5 6l-5 6l-6 7l-5 6l-6 6l-5 6l-6 5l-6 6l-6 6l-5 5l-6 6l-6 6l-6 5l-5 6l-6 5l-6 6l-5 5l-6 6l-5 5l-5 6M715 130l-1 12l-1 11l-1 12l-1 12l-2 12l-2 12l-3 12l-2 12l-3 11M715 130l-5 7l-5 6l-6 6l-5 6l-6 6l-5 6l-6 6l-5 6l-6 5l-6 6l-5 5l-6 6l-6 6l-5 5l-6 5l-5 6l-6 5l-5 6l-6 5l-5 6M717 133l-1 11l-1 12l-1 12l-2 12l-2 12l-3 12l-2 12l-3 11M717 133l-5 6l-5 7l-5 6l-5 6l-6 6l-5 6l-5 6l-6 5l-5 6l-6 6l-6 5l-5 6l-6 5l-5 5l-6 6l-5 5l-6 6l-5 5l-6 6l-5 5M719 135l-1 12l-2 12l-1 12l-2 12l-3 12l-2 12l-3 11M719 135l-5 7l-5 6l-5 6l-5 7l-5 6l-5 5l-5 6l-6 6l-5 6l-6 5l-5 6l-6 5l-5 6l-6 5l-5 5l-5 6l-6 5l-5 6l-6 5l-5 5M721 138l-2 12l-1 11l-2 12l-3 12l-2 13l-3 11M721 138l-5 6l-4 7l-5 6l-5 6l-5 6l-5 6l-5 6l-6 6l-5 5l-5 6l-6 6l-5 5l-5 5l-6 6l-5 5l-6 5l-5 6l-5 5l-6 5l-5 6M722 140l-2 12l-1 12l-3 12l-2 12l-3 12M722 140l-4 7l-5 6l-4 7l-5 6l-5 6l-5 6l-5 6l-5 6l-5 5l-5 6l-5 5l-6 6l-5 5l-5 6l-6 5l-5 5l-5 5l-6 6l-5 5l-5 5M723 143l-2 12l-2 12l-2 12l-3 12M723 143l-4 7l-4 6l-4 6l-5 7l-5 6l-4 6l-5 6l-5 5l-5 6l-5 6l-5 5l-6 6l-5 5l-5 5l-5 6l-6 5l-5 5l-5 5l-5 6l-5 5M724 146l-2 12l-2 12l-3 12M724 146l-4 6l-4 7l-4 6l-4 6l-5 7l-4 6l-5 6l-5 5l-5 6l-5 6l-5 5l-5 6l-5 5l-5 5l-5 6l-5 5l-5 5l-6 5l-5 5l-5 5M725 148l-2 12l-3 12l-3 10M725 148l-4 7l-3 6l-4 7l-5 6l-4 6l-4 7l-5 5l-4 6l-5 6l-5 6l-5 5l-5 6l-5 5l-5 5l-5 6l-5 5l-5 5l-5 5l-5 5l-5 5M726 151l-3 12l-3 10M726 151l-4 7l-3 6l-4 7l-4 6l-4 6l-5 6l-4 6l-4 6l-5 6l-5 6l-4 5l-5 6l-5 5l-5 5l-5 6l-5 5l-5 5l-5 5l-5 5l-5 5M726 153l-3 11M726 153l-3 7l-4 7l-3 6l-4 7l-4 6l-4 6l-4 6l-5 6l-4 6l-5 6l-4 5l-5 6l-5 5l-4 5l-5 6l-5 5l-5 5l-5 5l-5 5l-5 5M726 154l-3 9l-3 7l-4 6l-3 7l-4 6l-4 6l-4 6l-4 6l-4 6l-5 6l-4 5l-5 6l-4 5l-5 6l-5 5l-4 5l-5 5l-5 5l-5 5l-5 5M723 164l-3 8l-3 7l-4 6l-3 7l-4 6l-4 6l-4 6l-4 6l-4 6l-4 6l-5 5l-4 6l-5 5l-4 5l-5 5l-5 5l-4 5l-5 5l-5 5M720 173l-3 9l-3 6l-4 7l-3 6l-4 6l-4 6l-3 6l-4 6l-5 6l-4 5l-4 6l-5 5l-4 5l-5 6l-4 5l-5 5l-5 5l-4 5M717 182l-3 9l-3 7l-4 6l-3 6l-4 6l-3 6l-4 6l-4 6l-4 6l-5 5l-4 5l-4 6l-5 5l-4 5l-5 5l-4 5l-5 5M711 200l-3 7l-4 6l-3 6l-3 6l-4 6l-4 6l-4 6l-4 5l-4 6l-4 5l-5 5l-4 5l-4 5l-5 5l-4 5M708 209l-3 7l-3 6l-4 7l-3 5l-4 6l-4 6l-4 6l-4 5l-4 5l-4 6l-4 5l-4 5l-5 5l-4 5M705 218l-3 7l-3 7l-4 6l-3 6l-4 5l-4 6l-3 5l-4 6l-4 5l-4 5l-5 5l-4 5l-4 5M702 227l-3 8l-3 6l-4 6l-3 6l-4 5l-3 6l-4 5l-4 5l-4 6l-4 5l-4 5l-4 5M699 236l-3 8l-3 6l-4 6l-3 5l-3 6l-4 6l-4 5l-4 5l-3 5l-4 5l-4 5M696 244l-3 9l-3 6l-4 6l-3 5l-3 6l-4 5l-4 6l-3 5l-4 5l-4 5M690 262l-3 6l-3 6l-4 5l-3 6l-4 5l-3 5l-4 5l-4 5M687 270l-3 7l-3 6l-4 5l-3 6l-3 5l-4 5l-4 5M684 279l-3 7l-3 6l-3 5l-4 5l-3 6l-4 5M681 287l-3 8l-3 6l-3 5l-4 5l-3 5M678 295l-3 9l-3 6l-3 5l-3 5M672 312l-3 7l-3 5M669 320l-3 7" fill="none" stroke="#1a5200" stroke-width="0.62"/></g>
<ellipse cx="580.5" cy="146.8" rx="145.5" ry="61.2" transform="rotate(3.59 580.5 146.8)" fill="none" stroke="#127012" stroke-width="1.5"/>
<path d="M380 290C384.6 282.6 418.9 269 425.5 265.5C432.1 262 441.9 257.2 446 255C450.1 252.8 459.1 241.8 466.5 243.5C473.9 245.2 509.2 266.2 520 272C530.8 277.8 567.9 298.6 574.4 301.7C580.9 304.8 586.4 301.8 585 303C583.6 304.2 564.1 312.1 560 314C555.9 315.9 549.5 318.6 544 322C538.5 325.4 512.1 343.4 505 348C497.9 352.6 476.6 365.9 472.7 368.5C468.8 371.1 467.2 373.1 466 374C464.8 374.9 463.3 377.1 461 377.2C458.7 377.3 446.9 376.2 443.4 374.8C439.8 373.4 431.8 366.5 425.5 363C419.2 359.5 384.6 347.3 380 340C375.4 332.7 375.4 297.4 380 290Z" fill="#12c612"/>
<g clip-path="url(#cy)"><path d="M438 387l6-2l5-5l4-7l1-9l-1-11l-2-11l-5-11l-5-12l-8-10l-8-9l-9-8l-8-5l-9-3l-8-1l-6 2l-6 5M441 385l7-2l5-5l3-7l1-9l0-11l-3-11l-4-11l-6-12l-7-10l-8-9l-9-8l-9-5l-8-3l-8-1l-7 2l-5 5M445 383l6-2l5-5l4-7l1-9l-1-11l-2-11l-5-11l-5-12l-8-10l-8-10l-8-7l-9-5l-9-3l-8-1l-6 2l-6 5M448 381l7-3l5-4l3-8l1-9l0-10l-3-11l-4-12l-6-11l-7-10l-8-10l-9-7l-9-5l-8-3l-8-1l-7 2l-5 5M452 379l6-3l5-5l4-7l1-9l-1-10l-2-11l-5-12l-5-11l-8-10l-8-10l-8-7l-9-6l-9-3l-8 0l-6 2l-6 4M456 377l6-3l5-5l3-7l1-9l0-10l-3-11l-4-12l-6-11l-7-11l-8-9l-9-7l-9-6l-8-3l-8 0l-7 2l-5 4M459 375l6-3l5-5l4-7l1-9l-1-10l-2-11l-5-12l-5-11l-8-11l-8-9l-8-7l-9-6l-9-3l-8 0l-6 2l-6 4M463 373l6-3l5-5l3-7l1-9l0-10l-3-11l-4-12l-6-11l-7-11l-8-9l-9-8l-9-5l-8-3l-8 0l-7 2l-5 4M466 370l6-2l5-5l4-7l1-9l-1-10l-2-12l-4-11l-6-11l-8-11l-8-9l-8-8l-9-5l-9-3l-8-1l-6 3l-6 4M470 368l6-2l5-5l3-7l1-9l0-10l-3-12l-4-11l-6-12l-7-10l-8-9l-9-8l-9-5l-8-3l-8-1l-7 2l-5 5M473 366l6-2l5-5l4-7l1-9l-1-11l-2-11l-4-11l-6-12l-8-10l-8-9l-8-8l-9-5l-9-3l-8-1l-6 2l-6 5M477 364l6-2l5-5l3-7l1-9l0-11l-3-11l-4-11l-6-12l-7-10l-8-9l-9-8l-9-5l-8-3l-8-1l-7 2l-5 5M480 362l6-3l5-4l4-8l1-8l-1-11l-2-11l-4-12l-6-11l-8-10l-8-10l-8-7l-9-5l-9-3l-8-1l-6 2l-6 5M484 360l6-3l5-5l3-7l2-9l-1-10l-3-11l-4-12l-6-11l-7-10l-8-10l-9-7l-9-6l-8-3l-8 0l-7 2l-5 4M487 358l6-3l5-5l4-7l1-9l-1-10l-2-11l-4-12l-6-11l-8-11l-8-9l-8-7l-9-6l-9-3l-8 0l-6 2l-5 4M491 356l6-3l5-5l3-7l2-9l-1-10l-3-11l-4-12l-6-11l-7-11l-8-9l-9-7l-9-6l-8-3l-8 0l-7 2l-5 4M494 354l7-3l4-5l4-7l1-9l-1-10l-2-11l-4-12l-6-11l-8-11l-8-9l-8-7l-9-6l-9-3l-8 0l-6 2l-5 4M498 351l6-2l5-5l3-7l2-9l-1-10l-3-12l-4-11l-6-11l-7-11l-8-9l-9-8l-9-5l-8-3l-8 0l-7 2l-5 4M501 349l7-2l4-5l4-7l1-9l-1-10l-2-12l-4-11l-6-11l-8-11l-8-9l-8-8l-9-5l-9-3l-8-1l-6 2l-5 5M505 347l6-2l5-5l3-7l2-9l-1-11l-3-11l-4-11l-6-12l-7-10l-8-9l-9-8l-9-5l-8-3l-8-1l-7 2l-5 5M508 345l7-2l4-5l4-7l1-9l-1-11l-2-11l-4-11l-6-12l-8-10l-8-9l-8-8l-9-5l-9-3l-8-1l-6 2l-5 5M512 343l6-2l5-5l3-8l2-8l-1-11l-3-11l-4-11l-6-12l-7-10l-8-10l-9-7l-9-5l-8-3l-8-1l-7 2l-5 5M515 341l7-3l4-5l4-7l1-9l-1-10l-2-11l-4-12l-6-11l-8-10l-8-10l-8-7l-9-6l-9-3l-7 0l-7 2l-5 5M519 339l6-3l5-5l3-7l2-9l-1-10l-3-11l-4-12l-6-11l-7-11l-8-9l-9-7l-9-6l-8-3l-8 0l-7 2l-5 4M522 337l7-3l5-5l3-7l1-9l-1-10l-2-11l-4-12l-6-11l-8-11l-8-9l-8-7l-9-6l-9-3l-7 0l-7 2l-5 4M526 335l6-3l5-5l3-7l2-9l-1-10l-3-11l-4-12l-6-11l-7-11l-8-9l-9-7l-9-6l-8-3l-8 0l-7 2l-5 4M529 333l7-3l5-5l3-7l1-9l-1-10l-2-11l-4-12l-6-11l-7-11l-9-9l-8-8l-9-5l-9-3l-7 0l-7 2l-5 4M533 330l6-2l5-5l3-7l2-9l-1-10l-3-12l-4-11l-6-11l-7-11l-8-9l-9-8l-9-5l-8-3l-8-1l-7 3l-5 4M536 328l7-2l5-5l3-7l1-9l-1-11l-2-11l-4-11l-6-12l-7-10l-9-9l-8-8l-9-5l-9-3l-7-1l-7 2l-5 5M540 326l6-2l5-5l3-7l2-9l-1-11l-3-11l-4-11l-6-12l-7-10l-8-9l-9-8l-9-5l-8-3l-8-1l-7 2l-5 5M543 324l7-2l5-5l3-7l1-9l0-11l-3-11l-4-11l-6-12l-7-10l-9-10l-8-7l-9-5l-9-3l-7-1l-7 2l-5 5M547 322l6-3l5-4l3-8l2-9l-1-10l-3-11l-4-12l-6-11l-7-10l-8-10l-9-7l-9-5l-8-3l-8-1l-7 2l-5 5M550 320l7-3l5-5l3-7l1-9l0-10l-3-11l-4-12l-6-11l-7-10l-9-10l-8-7l-9-6l-9-3l-7 0l-7 2l-5 4M554 318l6-3l5-5l3-7l2-9l-1-10l-3-11l-4-12l-6-11l-7-11l-8-9l-9-7l-9-6l-8-3l-8 0l-7 2l-5 4M557 316l7-3l5-5l3-7l1-9l0-10l-3-11l-4-12l-6-11l-7-11l-9-9l-8-7l-9-6l-9-3l-7 0l-7 2l-5 4M561 314l6-3l5-5l3-7l2-9l-1-10l-2-11l-5-12l-6-11l-7-11l-8-9l-9-8l-9-5l-8-3l-8 0l-7 2l-5 4M564 311l7-2l5-5l3-7l1-9l0-10l-3-12l-4-11l-6-11l-7-11l-9-9l-8-8l-9-5l-9-3l-7-1l-7 3l-5 4M568 309l6-2l5-5l3-7l2-9l-1-10l-2-12l-5-11l-6-11l-7-11l-8-9l-9-8l-9-5l-8-3l-8-1l-7 2l-5 5M571 307l7-2l5-5l3-7l1-9l0-11l-3-11l-4-11l-6-12l-7-10l-9-9l-8-8l-9-5l-9-3l-7-1l-7 2l-5 5M575 305l6-2l5-5l3-7l2-9l-1-11l-2-11l-5-11l-6-12l-7-10l-8-9l-9-8l-9-5l-8-3l-8-1l-7 2l-5 5M578 303l7-2l5-5l3-8l1-8l0-11l-3-11l-4-12l-6-11l-7-10l-9-10l-8-7l-9-5l-9-3l-7-1l-7 2l-5 5M582 301l6-3l5-5l3-7l2-9l-1-10l-2-11l-5-12l-6-11l-7-10l-8-10l-9-7l-9-6l-8-3l-8 0l-7 2l-5 4M585 299l7-3l5-5l3-7l1-9l0-10l-3-11l-4-12l-6-11l-7-11l-9-9l-8-7l-9-6l-9-3l-7 0l-7 2l-5 4M589 297l6-3l5-5l3-7l2-9l-1-10l-2-11l-5-12l-6-11l-7-11l-8-9l-9-7l-9-6l-8-3l-8 0l-7 2l-5 4M592 295l7-3l5-5l3-7l1-9l0-10l-3-11l-4-12l-6-11l-7-11l-9-9l-8-7l-9-6l-9-3l-7 0l-7 2l-5 4M596 293l6-3l5-5l3-7l2-9l-1-10l-2-12l-5-11l-6-11l-7-11l-8-9l-9-8l-9-5l-8-3l-8 0l-7 2l-5 4M599 290l7-2l5-5l3-7l1-9l0-10l-3-12l-4-11l-6-11l-7-11l-9-9l-8-8l-9-5l-9-3l-7-1l-7 2l-5 5M603 288l6-2l5-5l3-7l2-9l-1-11l-2-11l-5-11l-6-12l-7-10l-8-9l-9-8l-9-5l-8-3l-8-1l-7 2l-5 5M606 286l7-2l5-5l3-7l1-9l0-11l-3-11l-4-11l-6-12l-7-10l-8-9l-9-8l-9-5l-9-3l-7-1l-7 2l-5 5M595 294l17-10M579 303l17-10l18-10M581 302l17-10l17-10M565 311l17-9l18-11l16-11M567 311l17-10l17-11l17-11M551 320l17-10l18-10l16-11l17-12M553 319l17-10l17-10l17-12l16-12M537 328l17-9l18-11l16-11l17-12l15-12M539 328l17-10l17-11l17-11l16-12l15-13M523 337l17-10l18-10l16-11l17-12l15-13l16-12M525 336l17-10l17-11l17-11l16-12l15-13l15-13M509 345l17-10l18-10l16-11l17-12l15-12l16-13l14-13M511 345l17-10l17-11l17-12l16-12l15-12l15-13l14-14M495 353l17-9l18-10l16-12l17-11l15-13l16-13l14-13l14-14M497 353l17-10l17-11l17-11l16-12l15-13l15-13l14-14l14-14M481 362l17-10l18-10l16-11l17-12l15-12l16-13l14-14l14-13l14-15M483 361l17-10l17-10l16-12l17-12l15-12l15-14l14-13l14-14l13-15M467 370l17-9l17-11l17-11l17-11l15-13l15-13l15-13l14-14l14-14l12-15M468 370l18-10l17-11l16-11l16-12l16-13l15-13l14-14l14-14l13-14l13-15M453 379l17-10l17-10l17-11l17-12l15-12l15-13l15-14l14-14l14-14l12-14l13-15M442 386l11-7M454 378l18-10l17-10l16-12l16-12l16-13l15-13l14-13l14-14l13-15l13-14l12-15M444 385l10-7M439 387l17-9l17-11l17-11l17-12l15-12l15-13l15-13l14-14l14-14l12-15l13-14l12-15M445 384l11-6l11-8M440 387l18-10l17-11l16-11l16-12l16-13l15-13l14-14l14-14l13-14l13-15l12-15l11-14M447 383l11-6l10-7M442 386l17-10l17-11l16-12l16-13l15-12l15-14l14-14l14-14l12-14l13-15l12-15l11-14M448 381l11-5l11-7l11-7M444 385l17-11l16-11l16-12l16-13l15-13l14-14l14-14l13-14l13-14l12-15l11-15l11-15M449 380l12-6l11-6l11-7M445 384l17-11l16-12l16-12l15-13l15-13l14-14l13-14l13-15l13-15l11-14l12-15l11-15M450 378l12-5l11-6l11-6l11-8M447 383l16-12l16-12l16-12l15-13l14-14l14-14l13-14l13-15l12-15l11-14l11-15l11-15M451 376l12-5l12-5l11-6l11-7M448 381l16-11l16-13l15-13l15-13l14-14l13-14l13-15l13-14l11-15l12-15l11-14l10-15M452 374l12-4l12-5l11-6l11-7l11-7M449 380l16-12l16-13l15-13l14-14l14-14l13-14l13-15l12-14l11-15l11-15l11-14l10-15M453 372l12-4l12-5l12-5l11-7l11-6M450 378l16-12l15-13l15-14l14-13l13-15l13-14l13-15l11-14l12-15l11-15l10-14l10-14M453 370l13-4l12-5l12-5l11-6l11-6l11-7M451 376l16-12l15-14l14-13l14-14l13-15l13-14l12-15l11-15l11-14l11-15l10-14l10-14M454 367l13-3l12-5l12-4l12-6l11-6l11-7M452 374l15-13l15-13l14-14l13-14l13-15l13-14l11-15l12-15l11-14l10-15l10-14l10-14M454 365l13-4l13-4l12-4l12-5l12-6l10-7l11-7M453 372l15-13l14-14l14-14l13-14l13-15l12-14l11-15l11-15l11-14l10-15l10-14l10-13M454 362l14-3l13-4l12-4l12-5l12-5l11-6l11-7M453 370l15-14l14-14l13-14l13-14l13-15l11-15l12-14l11-15l10-14l10-15l10-13l9-14M454 359l14-3l13-3l13-4l13-5l11-5l12-5l10-7l11-7M454 367l14-13l14-14l13-15l12-14l13-15l11-15l11-14l11-15l10-14l10-14l10-14l9-13M454 356l14-2l14-4l13-3l12-4l12-5l12-6l11-6l11-7M454 365l14-14l13-14l13-15l13-14l11-15l12-15l10-15l11-14l10-14l10-14l9-13l10-13M453 354l15-3l14-3l13-4l13-4l13-4l11-5l12-6l10-6l11-8M454 362l14-14l13-14l12-15l13-15l11-14l11-15l11-15l10-14l10-14l9-13l10-14l9-12M453 351l15-3l14-3l14-3l13-4l12-4l12-5l12-5l11-6l11-7M454 359l13-14l13-14l13-15l11-15l12-14l10-15l11-15l10-14l10-13l9-14l10-13l9-12M452 347l15-2l15-3l14-3l13-3l13-4l13-4l11-6l12-5l10-7l11-7M454 356l13-14l12-14l12-15l12-15l11-15l11-14l10-14l10-14l9-14l10-13l9-13l9-12M451 344l16-2l15-2l14-3l14-3l13-4l12-4l13-5l11-6l11-6l11-7M453 354l13-15l13-15l11-14l12-15l10-15l11-14l10-14l10-14l9-13l10-13l9-13l9-11M450 341l16-2l15-2l15-3l14-3l13-3l13-4l13-5l11-5l12-6l10-6l11-8M453 351l12-15l12-15l12-14l11-15l11-15l10-14l10-14l9-14l10-13l9-12l9-12l10-11M449 338l16-2l16-2l15-3l14-3l14-3l13-4l13-4l12-5l11-5l11-6l11-7M452 347l12-14l12-15l12-15l10-14l11-15l10-14l10-14l9-13l9-13l10-12l9-12l9-11M448 335l16-2l16-2l15-3l15-2l14-3l13-4l13-4l13-4l11-5l12-6l10-7l11-7M451 344l12-14l12-15l11-15l11-14l10-15l10-14l9-13l10-13l9-13l9-12l10-11l9-11M447 332l16-2l16-2l16-3l15-2l14-3l14-3l13-4l13-4l12-5l11-5l11-7l11-6M450 341l12-14l12-15l10-15l11-14l10-14l10-14l9-14l9-12l10-13l9-11l9-11l9-11M445 329l17-2l17-3l15-2l15-2l15-3l14-3l13-3l13-4l13-5l11-5l12-6l11-6M449 338l12-15l11-14l11-15l10-14l10-14l9-14l10-13l9-12l9-12l9-12l10-10l9-10M444 326l17-3l16-2l16-2l16-2l15-3l14-3l14-3l13-3l13-5l12-4l11-6l11-6M448 335l12-15l10-14l11-15l10-14l10-14l9-13l9-13l10-12l9-12l9-11l9-10l10-10M442 322l18-2l16-2l17-2l15-2l15-3l15-2l14-3l13-4l13-4l13-4l11-5l12-6M447 332l11-15l11-14l10-15l10-14l9-13l10-13l9-13l9-12l9-11l10-11l9-10l10-9M441 319l17-2l17-2l16-2l16-2l16-3l15-2l14-3l14-3l13-4l13-4l12-5l11-5M445 329l11-15l11-14l10-15l10-13l9-14l9-13l10-12l9-11l9-11l9-11l10-9l10-9M439 316l17-2l18-2l16-2l17-2l15-3l15-2l15-3l14-3l14-3l12-4l13-5l11-5M444 326l11-15l10-14l10-14l9-14l10-13l9-13l9-11l9-12l10-10l9-10l10-9l10-9M437 314l18-3l17-2l17-2l17-3l16-2l15-2l15-3l14-2l14-4l13-3l13-4l12-5M442 322l11-14l10-14l10-14l9-13l9-13l10-12l9-12l9-11l9-10l10-10l10-8l10-8M435 311l18-3l17-2l18-3l16-2l17-2l15-2l15-2l15-3l14-3l14-4l12-4l13-4M441 319l10-14l10-14l9-13l10-14l9-12l9-12l9-11l10-11l9-10l10-9l10-8l10-8M433 308l18-3l18-2l17-3l17-2l17-2l16-2l15-2l15-3l14-3l14-3l13-4l13-4M439 316l10-14l10-13l9-14l9-13l10-12l9-12l9-11l9-10l10-9l10-9l10-8l10-7M430 305l19-3l18-2l17-3l18-2l16-2l17-2l15-3l16-2l14-3l14-3l14-3l12-4M437 314l10-14l9-14l10-13l9-13l9-12l9-11l10-11l9-9l10-10l10-8l10-8l10-6M428 303l19-3l18-3l18-3l17-2l17-2l17-2l16-3l15-2l15-2l14-3l14-3l13-4M435 311l9-14l10-13l9-13l10-13l9-11l9-11l9-10l10-10l10-9l10-8l10-7l11-6M426 300l18-3l19-3l18-3l17-2l18-2l16-3l17-2l15-2l16-2l14-3l14-3l14-3M433 308l9-14l10-13l9-12l9-12l9-12l10-10l9-10l10-9l10-9l10-7l10-7l11-6M424 298l18-4l19-3l18-3l18-2l17-3l17-2l17-2l16-2l15-2l15-3l14-3l14-3M430 305l10-13l9-13l10-12l9-12l9-11l9-10l10-9l10-9l10-8l10-7l11-7l11-6M421 296l19-4l19-3l18-4l18-2l17-3l18-2l16-2l17-2l15-2l16-3l14-2l14-3M428 303l10-13l9-13l9-12l9-11l10-11l9-10l10-9l10-8l10-8l10-7l11-6M419 294l19-4l18-4l19-3l18-3l18-3l17-2l17-2l17-2l16-2l15-3l15-2l14-3M426 300l9-12l10-13l9-11l9-11l9-11l10-9l10-9l10-8l10-7l11-7l11-5M416 292l19-4l19-4l19-4l18-3l18-3l17-2l18-2l16-2l17-3l15-2l16-2l14-3M424 298l9-12l9-12l9-12l10-10l9-10l10-9l10-9l10-7l10-7l11-6M414 291l19-5l19-5l18-3l19-4l18-3l18-2l17-2l17-3l17-2l16-2l15-2l15-3M421 296l9-12l10-12l9-11l9-10l10-10l10-8l10-8l10-8l11-6l11-6M412 289l18-5l19-5l19-4l19-3l18-3l18-3l17-3l18-2l16-2l17-2l15-2l16-3M419 294l9-12l9-11l10-11l9-10l10-9l9-8l11-8l10-7l11-6M409 288l19-6l19-5l19-4l18-4l19-3l18-3l18-3l17-2l17-2l17-2l16-2l15-3M416 292l10-11l9-11l9-11l10-9l9-9l11-8l10-7l11-7l11-5M407 286l19-5l19-6l18-4l19-4l19-4l18-3l18-3l18-2l17-2l16-2l17-2l15-3M414 291l9-12l10-10l9-10l10-9l9-9l11-7l10-7l11-6M404 285l19-6l19-5l19-5l19-5l18-3l19-4l18-2l18-3l17-2l17-2l17-3l16-2M412 289l9-11l9-10l10-10l9-8l11-8l10-8l11-6l11-6M402 285l19-7l19-6l19-5l18-5l19-4l19-3l18-3l18-3l18-2l17-3l17-2l16-2M409 288l10-11l9-10l10-9l9-8l11-8l10-7l11-6M400 284l19-7l18-6l19-6l19-5l19-4l18-4l19-3l18-3l18-2l17-3l17-2l17-2M407 286l9-10l10-9l9-9l10-8l11-7l11-7l11-6M398 284l18-8l19-6l19-6l19-6l18-4l19-4l19-4l18-3l18-2l18-3l17-2l17-2M404 285l10-9l10-10l9-8l11-8l10-6l11-7M395 283l19-7l19-7l18-7l19-5l19-5l19-4l18-4l19-3l18-3l18-3l17-2l17-2M402 285l10-10l9-9l10-8l11-7l11-6l11-6M393 283l19-8l18-7l19-7l19-6l19-5l18-5l19-4l19-3l18-3l18-3l18-2l17-2M400 284l9-9l10-9l11-7l10-7l11-6M391 283l18-8l19-8l19-7l18-6l19-6l19-5l19-4l18-4l19-3l18-3l18-2l17-3M398 284l9-9l10-8l11-7l11-7l11-6M389 284l18-9l19-8l18-8l19-6l19-6l19-5l18-5l19-4l19-3l18-4l18-2l18-3M395 283l10-8l11-8l10-7l11-6M388 284l17-9l19-9l18-7l19-7l18-7l19-5l19-5l19-4l18-4l19-3l18-3l18-3M393 283l10-8l11-7l11-7l11-5M386 285l17-10l18-9l19-8l18-7l19-7l19-6l19-5l18-4l19-4l19-4l18-3l18-3M391 283l11-7l10-7l11-6M384 286l18-10l17-10l19-8l18-8l19-7l18-6l19-5l19-5l19-5l18-3l19-4l18-3M389 284l11-8l11-6l11-6M383 287l17-11l17-9l18-9l19-8l18-8l19-6l19-6l19-5l18-5l19-4l19-3l18-3M388 284l10-7l11-6M381 288l17-11l18-10l17-9l19-8l18-8l19-7l18-6l19-6l19-5l19-4l19-4l18-3M386 285l11-7l11-5M380 289l17-11l17-10l17-10l18-8l19-9l18-7l19-7l19-5l19-6l19-4l18-4l19-4M384 286l11-6M395 280l17-11l18-10l17-9l19-9l18-8l19-7l18-6l19-5l19-5l19-5l19-3M383 287l11-6M394 281l17-11l17-10l17-10l18-9l19-8l18-7l19-7l19-6l19-5l19-5l18-4M409 271l17-11l18-10l17-9l19-8l18-8l19-7l18-6l19-6l19-5l19-4M408 273l17-12l17-10l18-9l18-9l18-8l18-8l19-6l19-6l19-6l19-4M423 263l17-11l18-10l17-9l19-9l18-7l19-7l18-7l19-5l19-5M422 264l17-11l17-10l18-10l18-9l18-8l18-7l19-7l19-6l19-5M437 254l17-10l18-10l18-10l18-8l18-8l19-7l19-6l18-6M436 256l17-11l17-11l18-9l18-9l18-8l18-8l19-6l19-6M451 246l17-11l18-10l18-9l18-9l18-7l19-7l19-6M450 247l17-11l17-10l18-10l18-9l18-8l18-7l19-7M465 237l17-10l18-10l18-10l18-8l18-8l19-7M464 239l17-11l17-11l18-9l18-9l18-8l18-8M479 229l17-11l18-10l18-9l18-8l18-8M478 230l17-11l17-10l18-10l18-8l18-9M493 221l17-11l18-10l18-9l18-9M492 222l17-11l17-10l18-10l18-9M507 212l17-11l18-10l18-9M506 214l17-12l17-10l18-9M521 204l17-11l18-10M520 205l17-11l17-10" fill="none" stroke="#095209" stroke-width="0.5"/></g>
<polyline points="425.5,265.5 446,255 466.5,243.5" fill="none" stroke="#0a4a0a" stroke-width="0.9"/>
<polyline points="466.5,243.5 520,272 574.4,301.7" fill="none" stroke="#0a4a0a" stroke-width="0.6" opacity="0.7"/>
<polyline points="466,374 472.7,368.5 505,348 544,322 560,314" fill="none" stroke="#0a4a0a" stroke-width="0.8" opacity="0.8"/>
<path d="M574.4 301.7C578.7 303.9 594.1 309.7 600 314.6C605.9 319.5 609.6 325.9 609.6 331C609.6 336.1 605.1 340.9 600 345C594.9 349.1 587.3 352.8 579 355.6C570.7 358.4 559.8 360.4 550 362C540.2 363.6 525 364.5 520 365" fill="none" stroke="#0a4a0a" stroke-width="0.6" opacity="0.6"/>
<clipPath id="ct"><path d="M488 366C491.9 358.3 532.5 329.6 544 321C555.5 312.4 566.9 302.6 574.4 301.7C581.9 300.8 595.3 310.7 600 314.6C604.7 318.5 609.6 326.9 609.6 331C609.6 335.1 604.1 341.7 600 345C595.9 348.3 585.7 352.5 579 355.6C572.3 358.7 558.5 364.9 550 368C541.5 371.1 523.3 379.3 515 379C506.7 378.7 484.1 373.7 488 366Z"/></clipPath>
<g clip-path="url(#ct)"><path d="M554 316l1 2l1 1l1 1l1 1l0 2l0 1l0 1l0 1l-1 1l-1 1l-1 1l-1 1l-2 0l-1 0l-2 0l-1 0l-2 0l-1-1l-2-1l-1-1l-2-1l-1-1l0-1l-1-1l0-2l0-1l0-1l0-1l1-2l1 0l1-1l1-1M556 315l2 1l1 2l1 1l1 2l1 2l0 2l0 1l-1 2l-1 1l-1 1l-1 1l-2 1l-2 1l-2 0l-2 0l-2 0l-3-1l-2-1l-2-1l-1-1l-2-1l-1-2l-2-2l0-1l-1-2l0-2l0-1l1-2l1-1l1-2l2-1l1 0M558 313l2 2l2 2l1 2l1 2l1 2l0 2l0 2l-1 2l-1 2l-1 2l-2 1l-2 1l-3 1l-2 0l-3 0l-2 0l-3-1l-3-1l-2-1l-3-2l-2-2l-1-2l-2-2l-1-2l0-2l0-2l0-3l1-1l1-2l2-2l1-1l3-1M560 311l3 2l2 2l2 3l1 3l0 2l1 3l-1 2l0 3l-2 2l-2 2l-2 1l-2 1l-3 1l-3 1l-3 0l-4-1l-3-1l-3-1l-3-1l-3-2l-2-2l-2-3l-2-2l-1-3l-1-3l0-2l1-3l1-2l1-2l2-2l2-1l3-2M562 309l3 3l3 2l2 3l1 3l1 3l0 3l0 3l-1 3l-2 3l-2 2l-2 2l-3 1l-4 1l-3 0l-4 0l-4 0l-3-1l-4-1l-4-2l-3-2l-3-3l-2-3l-2-3l-1-3l-1-3l0-3l0-3l1-2l2-3l2-2l3-2l3-1M564 307l4 3l3 3l2 4l1 3l1 4l1 3l-1 3l-1 4l-2 2l-2 3l-3 2l-3 2l-4 1l-4 0l-4 0l-5 0l-4-1l-4-2l-4-2l-4-3l-3-3l-3-3l-2-3l-2-4l0-3l-1-3l1-4l1-3l2-3l2-2l3-2l4-2M567 305l3 4l3 3l3 4l2 4l1 4l0 4l0 3l-2 4l-2 3l-2 3l-4 2l-3 2l-5 1l-4 1l-5 0l-5-1l-5-1l-4-2l-5-2l-4-3l-4-3l-3-4l-2-3l-2-4l-1-4l0-4l1-4l1-3l2-4l3-2l3-3l4-1M569 304l4 3l3 4l3 4l2 5l1 4l0 4l0 4l-1 4l-3 4l-3 3l-3 3l-4 2l-5 1l-5 1l-6 0l-5-1l-5-1l-6-2l-5-3l-4-3l-4-4l-4-4l-2-4l-2-4l-1-5l0-4l0-4l2-4l2-3l3-3l4-3l4-2M571 302l4 4l4 4l3 5l2 4l2 5l0 5l-1 5l-1 4l-3 4l-3 3l-4 3l-4 2l-6 2l-5 1l-6 0l-6-1l-6-2l-6-2l-5-3l-5-3l-5-4l-3-5l-3-4l-2-5l-2-5l0-5l1-4l1-4l3-4l3-4l4-2l5-3M573 300l5 4l4 5l3 5l3 5l1 5l0 6l0 5l-2 4l-3 5l-3 3l-4 3l-5 3l-6 1l-6 1l-7 0l-6-1l-7-1l-6-3l-6-3l-5-3l-5-5l-4-5l-4-5l-2-5l-1-5l0-5l0-5l2-5l3-4l4-4l4-3l5-2M575 298l5 5l5 5l3 5l3 6l1 6l1 5l-1 6l-2 5l-2 4l-4 4l-5 4l-6 2l-6 2l-6 1l-7 0l-7-1l-7-2l-7-2l-7-4l-6-4l-5-4l-4-5l-4-6l-2-6l-2-5l0-6l1-5l2-5l3-5l4-4l5-3l5-3M577 296l6 5l4 6l4 5l3 7l2 6l0 6l0 6l-2 5l-3 5l-5 5l-5 3l-6 3l-6 2l-7 1l-8 0l-7-1l-8-2l-7-3l-7-4l-7-4l-5-5l-5-5l-4-6l-2-6l-2-7l0-6l1-5l2-6l3-5l4-4l5-4l6-2M579 294l6 6l5 6l4 6l3 6l2 7l1 6l-1 7l-2 6l-3 5l-5 5l-5 4l-7 3l-7 2l-7 1l-8 0l-8-1l-9-2l-7-3l-8-4l-7-5l-6-5l-5-6l-4-7l-3-6l-1-7l-1-6l1-7l2-5l4-6l5-4l5-4l7-3M581 293l6 5l6 6l5 7l3 7l2 7l0 7l-1 7l-2 6l-3 6l-5 5l-6 4l-7 3l-7 2l-8 1l-9 0l-9-1l-8-2l-9-3l-8-4l-7-5l-6-6l-6-6l-4-7l-3-7l-2-7l0-7l1-7l2-6l4-6l5-4l6-4l7-3M583 291l7 6l6 6l5 7l3 8l2 7l1 8l-1 7l-3 6l-3 7l-5 5l-6 4l-8 4l-8 2l-8 1l-9 0l-10-1l-9-2l-9-4l-8-4l-8-6l-7-6l-6-6l-4-7l-3-8l-2-7l-1-8l1-7l3-6l4-6l5-6l6-4l8-3M585 289l7 6l7 7l5 8l3 8l2 7l1 8l-1 8l-2 7l-4 6l-6 6l-6 5l-8 3l-8 3l-9 1l-10 0l-10-1l-10-3l-9-3l-9-5l-8-6l-7-6l-6-7l-5-8l-4-8l-2-8l0-7l1-8l3-7l4-6l5-6l7-4l8-4M587 287l8 7l7 7l5 8l4 8l2 9l1 8l-1 8l-3 7l-4 7l-6 6l-7 5l-8 4l-9 2l-9 2l-11 0l-10-2l-10-2l-10-4l-10-5l-8-6l-8-7l-6-7l-5-8l-4-8l-2-9l0-8l1-8l3-7l4-7l6-6l7-5l8-3M589 285l8 7l7 8l6 8l4 9l2 9l1 9l-1 8l-3 8l-4 7l-6 6l-7 5l-9 4l-9 3l-10 2l-11 0l-11-2l-11-3l-10-4l-10-5l-9-6l-8-7l-7-8l-6-9l-3-8l-3-9l0-9l1-8l3-8l5-7l6-6l7-5l9-4M591 283l9 8l7 8l6 9l4 9l3 9l0 9l-1 9l-3 8l-4 8l-6 6l-8 6l-9 4l-10 3l-10 1l-12 0l-11-1l-11-3l-11-4l-11-6l-9-6l-9-8l-7-8l-6-9l-4-9l-2-9l0-9l1-9l3-8l5-8l6-6l8-5l9-4M593 282l9 7l8 9l6 9l5 10l2 9l1 10l-1 9l-3 9l-5 8l-7 6l-8 6l-9 5l-10 3l-11 1l-12 0l-12-1l-12-4l-12-4l-11-6l-10-7l-8-7l-8-9l-6-9l-4-10l-2-10l-1-9l2-9l3-9l5-8l7-6l8-6l9-4M595 280l10 8l8 9l6 9l5 10l3 10l0 10l-1 10l-3 9l-5 8l-7 8l-8 6l-10 4l-11 3l-11 2l-13 0l-12-2l-13-3l-12-5l-11-6l-11-7l-9-8l-8-9l-6-10l-4-10l-3-10l0-10l1-9l4-9l5-8l7-7l8-6l10-5M597 278l10 8l9 10l6 10l5 10l3 11l1 10l-1 10l-4 10l-5 8l-7 8l-9 6l-10 5l-11 3l-12 2l-13 0l-13-2l-13-3l-13-5l-12-6l-11-8l-9-9l-9-9l-6-10l-5-11l-2-10l-1-10l2-10l3-10l6-8l7-8l9-6l10-4M599 276l11 9l8 10l7 10l5 11l3 11l1 11l-1 10l-4 10l-5 9l-7 8l-9 6l-11 5l-12 4l-13 1l-13 0l-13-1l-14-4l-13-5l-13-6l-11-8l-10-9l-8-10l-7-10l-5-11l-3-11l0-11l1-11l4-9l6-9l8-8l9-6l11-5M602 274l10 9l9 10l7 11l6 12l3 11l1 11l-2 11l-3 10l-6 10l-8 8l-9 7l-11 5l-12 3l-14 2l-13 0l-15-2l-14-3l-13-5l-13-7l-12-8l-11-10l-8-10l-7-11l-5-11l-3-12l-1-11l2-11l4-10l6-9l8-8l9-6l12-5M604 272l11 10l9 10l8 12l5 11l3 12l1 12l-1 11l-4 11l-6 10l-8 8l-10 7l-11 5l-13 4l-14 2l-14 0l-15-2l-14-4l-14-5l-14-7l-12-9l-11-9l-9-11l-7-11l-6-12l-2-12l-1-12l2-11l4-10l6-10l8-8l10-7l12-5M606 271l11 9l10 11l8 12l5 12l4 12l1 13l-2 11l-4 11l-6 10l-8 9l-10 7l-12 6l-13 4l-15 2l-15 0l-15-2l-15-4l-15-6l-14-7l-12-9l-12-10l-9-11l-8-12l-5-12l-3-12l-1-12l2-12l4-11l7-10l8-8l11-7l12-6M608 269l12 10l10 11l8 12l6 13l3 13l1 12l-1 12l-4 12l-7 10l-8 9l-11 8l-12 6l-14 4l-15 2l-15-1l-16-2l-16-4l-15-5l-14-8l-13-9l-12-10l-10-12l-8-12l-5-13l-3-12l-1-13l2-12l4-11l7-10l9-9l10-8l13-5M554 316l54-47M559 314l55-40M555 318l65-39M561 316l65-31M557 319l74-28M563 318l72-20M557 320l82-16M564 320l78-9M558 322l86-5M565 322l81 2M558 323l90 8M565 325l83 12M558 324l90 20M565 327l82 23M558 326l87 30M564 329l79 33M558 327l82 41M563 331l74 42M557 328l76 50M562 333l66 50M556 329l67 58M560 334l57 57M554 329l57 65M558 335l46 62M553 330l44 69M555 336l35 65M551 330l31 72M552 336l22 67M550 330l16 73M550 336l8 66M548 330l1 71M547 335l-6 65M546 330l-13 67M544 335l-19 60M545 329l-28 63M541 333l-32 55M543 328l-42 56M539 332l-45 48M542 327l-55 48M536 330l-55 39M540 326l-65 38M534 328l-64 30M539 325l-74 27M533 326l-73 19M539 324l-82 15M532 324l-78 8M538 322l-87 4M531 321l-82-2M538 321l-90-9M531 319l-83-13M538 320l-90-21M531 317l-82-24M538 318l-87-31M532 315l-79-34M538 317l-82-42M533 313l-73-43M539 316l-75-51M534 311l-65-51M540 315l-66-59M536 310l-56-57M542 314l-56-65M539 309l-46-62" fill="none" stroke="#095209" stroke-width="0.4"/></g>
<path d="M400 270C404.2 260.3 418.3 280.3 425.5 287C432.7 293.7 438.1 303 443.4 310.4C448.7 317.8 453.6 324.9 457.5 331.5C461.4 338.1 465.1 344.4 466.8 350.3C468.6 356.2 469 362.1 468 366.6C467 371.1 465.1 375.8 461 377.2C456.9 378.6 449.3 377.2 443.4 374.8C437.5 372.4 432.7 368 425.5 363C418.3 358 404.2 360.5 400 345C395.8 329.5 395.8 279.7 400 270Z" fill="#f0f400"/>
<g clip-path="url(#cp)"><path d="M381 210l138 24M381 213l138 24M380 216l138 24M380 219l138 24M379 221l138 25M379 224l138 25M378 227l138 24M378 230l138 24M377 233l138 24M377 236l138 24M376 239l138 24M376 241l138 25M375 244l138 25M375 247l138 24M374 250l138 24M374 253l138 24M373 256l138 24M373 259l138 24M372 261l138 25M372 264l137 25M371 267l138 24M371 270l137 24M370 273l138 24M370 276l137 24M369 279l138 24M369 281l137 25M368 284l138 25M368 287l137 24M367 290l138 24M367 293l137 24M366 296l138 24M366 299l137 24M365 301l138 25M365 304l137 25M364 307l138 24M364 310l137 24M363 313l138 24M363 316l137 24M362 319l138 24M362 321l137 25M361 324l138 25M361 327l137 24M360 330l138 24M360 333l137 24M359 336l138 24M359 339l137 24M358 341l138 25M358 344l137 25M357 347l138 24M357 350l137 24M356 353l138 24M356 356l137 24M355 359l138 24M355 361l137 25M354 364l138 25M353 367l138 24M353 370l138 24M352 373l138 24M352 376l138 24M351 379l138 24M351 381l138 25M350 384l138 25M350 387l138 24M349 390l138 24M349 393l138 24M348 396l138 24M348 399l138 24M347 401l138 25M347 404l138 25M346 407l138 24M346 410l138 24M345 413l138 24M345 416l138 24M506 224l48 131M503 225l48 131M501 225l48 132M498 226l48 132M495 227l48 132M493 228l47 132M490 229l48 132M487 230l48 132M484 231l48 132M482 232l48 132M479 233l48 132M476 234l48 132M473 235l48 132M471 236l48 132M468 237l48 132M465 238l48 132M463 239l47 132M460 240l48 132M457 241l48 132M454 242l48 132M452 243l48 132M449 244l48 132M446 245l48 132M443 246l48 132M441 247l48 132M438 248l48 132M435 249l48 132M433 250l47 132M430 251l48 132M427 252l48 132M424 253l48 132M422 254l48 132M419 255l48 132M416 256l48 132M414 257l47 132M411 258l48 132M408 259l48 132M405 260l48 132M403 261l47 132M400 262l48 132M397 263l48 132M394 264l48 132M392 265l48 132M389 266l48 132M386 267l48 132M384 268l47 132M381 269l48 132M378 270l48 132M375 271l48 132M373 272l48 132M370 273l48 132M367 274l48 132M364 275l48 132M362 276l48 132M359 277l48 132M356 278l48 132M354 279l47 132M351 280l48 132M348 281l48 132M345 282l48 132M343 283l48 132M340 284l48 132M337 285l48 132M334 286l48 132M332 287l48 132M329 288l48 132M326 289l48 132M324 290l47 132M321 291l48 132M318 292l48 132M315 293l48 132M313 294l48 131M310 295l48 131M557 338l-90 108M555 337l-90 107M553 335l-90 107M550 333l-90 107M548 331l-90 107M546 329l-90 107M544 327l-90 108M541 325l-90 108M539 324l-90 107M537 322l-90 107M535 320l-90 107M533 318l-90 107M530 316l-90 107M528 314l-90 107M526 312l-90 108M524 311l-90 107M521 309l-90 107M519 307l-90 107M517 305l-90 107M515 303l-90 107M513 301l-90 107M510 299l-90 108M508 297l-90 108M506 296l-90 107M504 294l-90 107M501 292l-90 107M499 290l-90 107M497 288l-90 107M495 286l-90 108M493 284l-90 108M490 283l-90 107M488 281l-90 107M486 279l-90 107M484 277l-90 107M481 275l-90 107M479 273l-90 107M477 271l-90 108M475 270l-90 107M473 268l-90 107M470 266l-90 107M468 264l-90 107M466 262l-90 107M464 260l-90 107M461 258l-90 108M459 256l-90 108M457 255l-90 107M455 253l-90 107M453 251l-90 107M450 249l-90 107M448 247l-90 107M446 245l-90 108M444 243l-90 108M441 242l-90 107M439 240l-90 107M437 238l-90 107M435 236l-90 107M433 234l-90 107M430 232l-90 107M428 230l-90 108M426 229l-90 107M424 227l-90 107M421 225l-90 107M419 223l-90 107M417 221l-90 107M415 219l-90 107M413 217l-90 108M410 215l-90 108M408 214l-90 107M406 212l-90 107M404 210l-90 107M401 208l-90 107M399 206l-90 107M397 204l-90 108" fill="none" stroke="#1a5200" stroke-width="0.62"/></g>
<path d="M400 270C404.2 260.3 418.3 280.3 425.5 287C432.7 293.7 438.1 303 443.4 310.4C448.7 317.8 453.6 324.9 457.5 331.5C461.4 338.1 465.1 344.4 466.8 350.3C468.6 356.2 469 362.1 468 366.6C467 371.1 465.1 375.8 461 377.2C456.9 378.6 449.3 377.2 443.4 374.8C437.5 372.4 432.7 368 425.5 363C418.3 358 404.2 360.5 400 345C395.8 329.5 395.8 279.7 400 270Z" fill="none" stroke="#127012" stroke-width="0.8"/>
<line x1="506.3" y1="180.8" x2="593.8" y2="180.8" stroke="#b8b070" stroke-width="0.9" opacity="0.8"/>
<line x1="552.3" y1="180.8" x2="556" y2="206" stroke="#3a3a10" stroke-width="0.8"/>
<line x1="582.5" y1="66" x2="567.5" y2="206" stroke="#a8f838" stroke-width="1.1"/>
<line x1="574.4" y1="302.7" x2="599.6" y2="430.8" stroke="#f0b020" stroke-width="1.1"/>
<line x1="521" y1="312.3" x2="592" y2="312.3" stroke="#a8a8a8" stroke-width="0.9" opacity="0.8"/>
<line x1="644" y1="312.3" x2="709.3" y2="313.7" stroke="#8a8a8a" stroke-width="0.9"/>
<line x1="709.3" y1="313.7" x2="688" y2="271" stroke="#8a8a8a" stroke-width="0.9"/>
<line x1="425.5" y1="234.7" x2="453.6" y2="234.7" stroke="#2a86d8" stroke-width="1.2"/>
<line x1="453" y1="235" x2="452" y2="250" stroke="#b0b0b0" stroke-width="0.8"/>
</svg>
<div class="btn" style="left:4.5px;top:66.8px;width:47.1px;height:13.7px;font-size:8.6px;line-height:12.7px;"><span style="display:inline-block;transform:scaleX(0.9)">expand</span></div><div class="inp" style="left:55px;top:66.8px;width:29.8px;height:13.7px;"><span style="position:absolute;left:2px;top:0;line-height:12.7px;font-size:8.8px;-webkit-text-stroke:0.15px #000;">1</span><div class="spin" style="height:11.7px"><svg width="8" height="11.7" viewBox="0 0 8 10"><path d="M2 4 L4 2 L6 4 M2 6 L4 8 L6 6" fill="none" stroke="#8a8a8a" stroke-width="0.9"/></svg></div></div><div class="btn" style="left:89.5px;top:66.8px;width:47.5px;height:13.7px;font-size:8.6px;line-height:12.7px;"><span style="display:inline-block;transform:scaleX(0.9)">figure <svg width="7" height="7" viewBox="0 0 7 7" style="vertical-align:-0.5px"><path d="M1.7 7V1M0.4 2.4L1.7 0.6L3 2.4M5.3 7V1M4 2.4L5.3 0.6L6.6 2.4" fill="none" stroke="#333" stroke-width="0.65"/></svg></span></div><div class="btn" style="left:140.6px;top:66.8px;width:48px;height:13.7px;font-size:8.6px;line-height:12.7px;"><span style="display:inline-block;transform:scaleX(0.9)">figure <svg width="7" height="7" viewBox="0 0 7 7" style="vertical-align:-0.5px"><path d="M1.7 0V6M0.4 4.6L1.7 6.4L3 4.6M5.3 0V6M4 4.6L5.3 6.4L6.6 4.6" fill="none" stroke="#333" stroke-width="0.65"/></svg></span></div><div class="lab" style="left:198.8px;top:67.2px;font-size:10.15px;">main <span style="font-weight:normal;letter-spacing:-1.2px">&gt;&gt;</span>&nbsp;</div><div class="lab" style="left:235px;top:67.2px;font-size:10.15px;">r% =</div><div class="lab" style="left:258.4px;top:67.2px;font-size:10.15px;color:#b81818;font-weight:bold;-webkit-text-stroke:0.2px #b81818">57</div><div class="lab" style="left:275.8px;top:67.2px;font-size:10.15px;">h% =</div><div class="lab" style="left:300.4px;top:67.2px;font-size:10.15px;color:#b81818;font-weight:bold;-webkit-text-stroke:0.2px #b81818">100</div><div class="btn" style="left:323.4px;top:66.8px;width:76px;height:13.7px;font-size:8.6px;line-height:12.7px;"><span style="display:inline-block;transform:scaleX(0.9)">new appendix 2</span></div><div class="lab" style="left:402.5px;top:67.2px;font-size:10.15px;"><span style="font-weight:normal;letter-spacing:-1.2px">&gt;&gt;</span> appendix</div><div class="inp" style="left:454.4px;top:66.8px;width:23.5px;height:13.7px;"><span style="position:absolute;left:2px;top:0;line-height:12.7px;font-size:8.8px;-webkit-text-stroke:0.15px #000;">1</span><div class="spin" style="height:11.7px"><svg width="8" height="11.7" viewBox="0 0 8 10"><path d="M2 4 L4 2 L6 4 M2 6 L4 8 L6 6" fill="none" stroke="#8a8a8a" stroke-width="0.9"/></svg></div></div><div class="lab" style="left:482px;top:67.2px;font-size:10.15px;"><span style="font-weight:normal;letter-spacing:-1.2px">&gt;&gt;</span> up%</div><div class="inp" style="left:514.8px;top:66.8px;width:29.7px;height:13.7px;"><span style="position:absolute;left:2px;top:0;line-height:12.7px;font-size:8.8px;-webkit-text-stroke:0.15px #000;">44</span><div class="spin" style="height:11.7px"><svg width="8" height="11.7" viewBox="0 0 8 10"><path d="M2 4 L4 2 L6 4 M2 6 L4 8 L6 6" fill="none" stroke="#8a8a8a" stroke-width="0.9"/></svg></div></div><div class="lab" style="left:549px;top:67.2px;font-size:10.15px;">&#966;&#176;</div><div class="inp" style="left:561.6px;top:66.8px;width:29.6px;height:13.7px;"><span style="position:absolute;left:2px;top:0;line-height:12.7px;font-size:8.8px;-webkit-text-stroke:0.15px #000;">44</span><div class="spin" style="height:11.7px"><svg width="8" height="11.7" viewBox="0 0 8 10"><path d="M2 4 L4 2 L6 4 M2 6 L4 8 L6 6" fill="none" stroke="#8a8a8a" stroke-width="0.9"/></svg></div></div><div class="lab" style="left:595.8px;top:67.2px;font-size:10.15px;">r%</div><div class="inp" style="left:610.3px;top:66.8px;width:30.7px;height:13.7px;"><span style="position:absolute;left:2px;top:0;line-height:12.7px;font-size:8.8px;color:#c00000;font-weight:bold;">44</span><div class="spin" style="height:11.7px"><svg width="8" height="11.7" viewBox="0 0 8 10"><path d="M2 4 L4 2 L6 4 M2 6 L4 8 L6 6" fill="none" stroke="#8a8a8a" stroke-width="0.9"/></svg></div></div><div class="lab" style="left:646px;top:67.2px;font-size:10.15px;">&#952;%</div><div class="inp" style="left:662.4px;top:66.8px;width:29.2px;height:13.7px;"><span style="position:absolute;left:2px;top:0;line-height:12.7px;font-size:8.8px;-webkit-text-stroke:0.15px #000;">100</span><div class="spin" style="height:11.7px"><svg width="8" height="11.7" viewBox="0 0 8 10"><path d="M2 4 L4 2 L6 4 M2 6 L4 8 L6 6" fill="none" stroke="#8a8a8a" stroke-width="0.9"/></svg></div></div><div class="lab" style="left:695.7px;top:67.2px;font-size:10.15px;">h%</div><div class="inp" style="left:712.6px;top:66.8px;width:29.2px;height:13.7px;"><span style="position:absolute;left:2px;top:0;line-height:12.7px;font-size:8.8px;color:#c00000;font-weight:bold;">44</span><div class="spin" style="height:11.7px"><svg width="8" height="11.7" viewBox="0 0 8 10"><path d="M2 4 L4 2 L6 4 M2 6 L4 8 L6 6" fill="none" stroke="#8a8a8a" stroke-width="0.9"/></svg></div></div><div class="btn" style="left:746.5px;top:66.8px;width:15px;height:13.7px;font-size:8.6px;line-height:12.7px;"><span style="display:inline-block;transform:scaleX(0.9)"></span></div><svg class="a" style="left:746.5px;top:67px" width="15" height="14" viewBox="0 0 15 14"><path d="M4.6 6.6Q4.8 9.6 7.5 9.6Q10.2 9.6 10.4 6.6" fill="none" stroke="#333" stroke-width="0.9"/></svg><div class="btn" style="left:764.3px;top:66.8px;width:14.3px;height:13.7px;font-size:8.6px;line-height:12.7px;"><span style="display:inline-block;transform:scaleX(0.9)"></span></div><svg class="a" style="left:764.3px;top:67px" width="15" height="14" viewBox="0 0 15 14"><path d="M4.3 7.3Q5 4.1 7.2 4.1Q9.4 4.1 10.2 7.3" fill="none" stroke="#333" stroke-width="0.9"/></svg><div class="btn" style="left:781.5px;top:66.8px;width:47.9px;height:13.7px;font-size:8.6px;line-height:12.7px;"><span style="display:inline-block;transform:scaleX(0.9)">apply</span></div><div class="btn" style="left:832.7px;top:66.8px;width:11.3px;height:13.7px;font-size:8.6px;line-height:12.7px;"><span style="display:inline-block;transform:scaleX(0.9)"><span style="color:#d03030;font-size:9.5px;font-weight:normal">X</span></span></div>
<div class="a" style="left:852.8px;top:54.15px;width:39.2px;height:39.2px;border-radius:50%;background:#4a9fe8"></div>
<div class="a" style="left:42.5px;top:81.7px;width:5px;height:415px;background:#e5e5e5"></div>
<div class="a" style="left:47.5px;top:81.7px;width:378.7px;height:422.9px;background:#fbfbfb"></div><div class="a" style="left:47.5px;top:81.7px;width:378.7px;height:32.7px;background:#404040"></div><div class="a" style="font-family:'Liberation Serif',serif;font-weight:bold;color:#fff;white-space:nowrap;font-weight:normal;-webkit-text-stroke:0.08px #fff;left:75.7px;top:83.9px;font-size:10.1px;line-height:12px"><span style="position:relative;top:0;font-weight:bold">*****</span> press key on mouse click / on movement / always <span style="position:relative;top:0;font-weight:bold">*****</span></div><div class="a" style="font-family:'Liberation Serif',serif;font-weight:bold;color:#fff;white-space:nowrap;font-weight:normal;-webkit-text-stroke:0.08px #fff;left:353.3px;top:83.9px;font-size:10.1px;line-height:12px">key help</div><svg class="a" style="left:390.5px;top:86px" width="8" height="8" viewBox="0 0 8 8"><path d="M1.2 6.4L5.6 2M2.2 7.2L6.4 3M4 1.6H7V4.6" fill="none" stroke="#f4f4f4" stroke-width="1"/></svg><div class="a" style="font-family:'Liberation Serif',serif;font-weight:bold;color:#fff;white-space:nowrap;left:75.7px;top:99.5px;font-size:10px;line-height:12px">area</div><div class="a" style="font-family:'Liberation Serif',serif;font-weight:bold;color:#fff;white-space:nowrap;left:128.5px;top:99.5px;font-size:10px;line-height:12px">key</div><div class="a" style="font-family:'Liberation Serif',serif;font-weight:bold;color:#fff;white-space:nowrap;left:252.7px;top:99.5px;font-size:10px;line-height:12px">meaning / effect</div><div class="a" style="left:154.2px;top:105.6px;width:88.2px;height:0.9px;background:#e8e8e8"></div><div class="a" style="left:331.8px;top:105.6px;width:88.6px;height:0.9px;background:#e8e8e8"></div><div class="cell" style="left:49.8px;top:115.4px;width:71.4px;height:18.7px;line-height:19.7px;text-align:left;padding-left:4px;"></div><div class="cell" style="left:123.6px;top:115.4px;width:23.7px;height:18.7px;line-height:19.7px;text-align:center;"></div><div class="cell" style="left:149.6px;top:115.4px;width:274.6px;height:18.7px;line-height:19.7px;text-align:left;padding-left:4px;">(spacebar) download design file: nnn-dsgn.txt</div><div class="cell" style="left:49.8px;top:135.1px;width:71.4px;height:16.6px;line-height:17.6px;text-align:left;padding-left:4px;">MAIN</div><div class="cell" style="left:123.6px;top:135.1px;width:23.7px;height:16.6px;line-height:17.6px;text-align:center;">m</div><div class="cell" style="left:149.6px;top:135.1px;width:274.6px;height:16.6px;line-height:17.6px;text-align:left;padding-left:4px;">on blue - move</div><div class="cell" style="left:49.8px;top:152.7px;width:71.4px;height:16.6px;line-height:17.6px;text-align:left;padding-left:4px;">.</div><div class="cell" style="left:123.6px;top:152.7px;width:23.7px;height:16.6px;line-height:17.6px;text-align:center;">i</div><div class="cell" style="left:149.6px;top:152.7px;width:274.6px;height:16.6px;line-height:17.6px;text-align:left;padding-left:4px;">on blue - insert</div><div class="cell" style="left:49.8px;top:170.3px;width:71.4px;height:16.6px;line-height:17.6px;text-align:left;padding-left:4px;">.</div><div class="cell" style="left:123.6px;top:170.3px;width:23.7px;height:16.6px;line-height:17.6px;text-align:center;">d</div><div class="cell" style="left:149.6px;top:170.3px;width:274.6px;height:16.6px;line-height:17.6px;text-align:left;padding-left:4px;">on blue - delete</div><div class="cell" style="left:49.8px;top:187.9px;width:71.4px;height:16.6px;line-height:17.6px;text-align:left;padding-left:4px;">.</div><div class="cell" style="left:123.6px;top:187.9px;width:23.7px;height:16.6px;line-height:17.6px;text-align:center;">c</div><div class="cell" style="left:149.6px;top:187.9px;width:274.6px;height:16.6px;line-height:17.6px;text-align:left;padding-left:4px;">on green - open CUT editing for the clicked elevation point</div><div class="cell" style="left:49.8px;top:205.5px;width:71.4px;height:16.6px;line-height:17.6px;text-align:left;padding-left:4px;">.</div><div class="cell" style="left:123.6px;top:205.5px;width:23.7px;height:16.6px;line-height:17.6px;text-align:center;">s</div><div class="cell" style="left:149.6px;top:205.5px;width:274.6px;height:16.6px;line-height:17.6px;text-align:left;padding-left:4px;">on green - load file with cross-section shape, file selection</div><div class="cell" style="left:49.8px;top:223.1px;width:71.4px;height:16.6px;line-height:17.6px;text-align:left;padding-left:4px;">.</div><div class="cell" style="left:123.6px;top:223.1px;width:23.7px;height:16.6px;line-height:17.6px;text-align:center;">r</div><div class="cell" style="left:149.6px;top:223.1px;width:274.6px;height:16.6px;line-height:17.6px;text-align:left;padding-left:4px;">on green - remove cross section</div><div class="cell" style="left:49.8px;top:240.7px;width:71.4px;height:16.6px;line-height:17.6px;text-align:left;padding-left:4px;">.</div><div class="cell" style="left:123.6px;top:240.7px;width:23.7px;height:16.6px;line-height:17.6px;text-align:center;">v</div><div class="cell" style="left:149.6px;top:240.7px;width:274.6px;height:16.6px;line-height:17.6px;text-align:left;padding-left:4px;">left system: open VERTical editing on the circumference</div><div class="cell" style="left:49.8px;top:258.3px;width:71.4px;height:16.6px;line-height:17.6px;text-align:left;padding-left:4px;">CUT</div><div class="cell" style="left:123.6px;top:258.3px;width:23.7px;height:16.6px;line-height:17.6px;text-align:center;">m</div><div class="cell" style="left:149.6px;top:258.3px;width:274.6px;height:16.6px;line-height:17.6px;text-align:left;padding-left:4px;">on blue - move</div><div class="cell" style="left:49.8px;top:275.9px;width:71.4px;height:16.6px;line-height:17.6px;text-align:left;padding-left:4px;">.</div><div class="cell" style="left:123.6px;top:275.9px;width:23.7px;height:16.6px;line-height:17.6px;text-align:center;">s</div><div class="cell" style="left:149.6px;top:275.9px;width:274.6px;height:16.6px;line-height:17.6px;text-align:left;padding-left:4px;">on blue - scale cross-section shape</div><div class="cell" style="left:49.8px;top:293.5px;width:71.4px;height:16.6px;line-height:17.6px;text-align:left;padding-left:4px;">.</div><div class="cell" style="left:123.6px;top:293.5px;width:23.7px;height:16.6px;line-height:17.6px;text-align:center;">v</div><div class="cell" style="left:149.6px;top:293.5px;width:274.6px;height:16.6px;line-height:17.6px;text-align:left;padding-left:4px;">on green - open VERTical editing</div><div class="cell" style="left:49.8px;top:311.1px;width:71.4px;height:16.6px;line-height:17.6px;text-align:left;padding-left:4px;">VERT</div><div class="cell" style="left:123.6px;top:311.1px;width:23.7px;height:16.6px;line-height:17.6px;text-align:center;">n</div><div class="cell" style="left:149.6px;top:311.1px;width:274.6px;height:16.6px;line-height:17.6px;text-align:left;padding-left:4px;">on blue left - change in base height</div><div class="cell" style="left:49.8px;top:328.7px;width:71.4px;height:16.6px;line-height:17.6px;text-align:left;padding-left:4px;">.</div><div class="cell" style="left:123.6px;top:328.7px;width:23.7px;height:16.6px;line-height:17.6px;text-align:center;">m</div><div class="cell" style="left:149.6px;top:328.7px;width:274.6px;height:16.6px;line-height:17.6px;text-align:left;padding-left:4px;">on blue right - move the individual heights</div><div class="cell" style="left:49.8px;top:346.3px;width:71.4px;height:16.6px;line-height:17.6px;text-align:left;padding-left:4px;">CAP</div><div class="cell" style="left:123.6px;top:346.3px;width:23.7px;height:16.6px;line-height:17.6px;text-align:center;">m</div><div class="cell" style="left:149.6px;top:346.3px;width:274.6px;height:16.6px;line-height:17.6px;text-align:left;padding-left:4px;">on blue - move edge height</div><div class="cell" style="left:49.8px;top:363.9px;width:71.4px;height:16.6px;line-height:17.6px;text-align:left;padding-left:4px;">.</div><div class="cell" style="left:123.6px;top:363.9px;width:23.7px;height:16.6px;line-height:17.6px;text-align:center;">t</div><div class="cell" style="left:149.6px;top:363.9px;width:274.6px;height:16.6px;line-height:17.6px;text-align:left;padding-left:4px;">on red - translate position of the center, any</div><div class="cell" style="left:49.8px;top:381.5px;width:71.4px;height:16.6px;line-height:17.6px;text-align:left;padding-left:4px;">.</div><div class="cell" style="left:123.6px;top:381.5px;width:23.7px;height:16.6px;line-height:17.6px;text-align:center;">o</div><div class="cell" style="left:149.6px;top:381.5px;width:274.6px;height:16.6px;line-height:17.6px;text-align:left;padding-left:4px;">on green - upper opening of the cap, horizontal</div><div class="cell" style="left:49.8px;top:399.1px;width:71.4px;height:16.6px;line-height:17.6px;text-align:left;padding-left:4px;">.</div><div class="cell" style="left:123.6px;top:399.1px;width:23.7px;height:16.6px;line-height:17.6px;text-align:center;">h</div><div class="cell" style="left:149.6px;top:399.1px;width:274.6px;height:16.6px;line-height:17.6px;text-align:left;padding-left:4px;">on magenta - change of cap height, vertical</div><div class="cell" style="left:49.8px;top:416.7px;width:71.4px;height:16.6px;line-height:17.6px;text-align:left;padding-left:4px;">FIN 3D</div><div class="cell" style="left:123.6px;top:416.7px;width:23.7px;height:16.6px;line-height:17.6px;text-align:center;">f</div><div class="cell" style="left:149.6px;top:416.7px;width:274.6px;height:16.6px;line-height:17.6px;text-align:left;padding-left:4px;">forth - take if not click box checked</div><div class="cell" style="left:49.8px;top:434.3px;width:71.4px;height:16.6px;line-height:17.6px;text-align:left;padding-left:4px;">.</div><div class="cell" style="left:123.6px;top:434.3px;width:23.7px;height:16.6px;line-height:17.6px;text-align:center;">b</div><div class="cell" style="left:149.6px;top:434.3px;width:274.6px;height:16.6px;line-height:17.6px;text-align:left;padding-left:4px;">back - take if not click box checked</div><div class="cell" style="left:49.8px;top:451.9px;width:71.4px;height:16.6px;line-height:17.6px;text-align:left;padding-left:4px;">.</div><div class="cell" style="left:123.6px;top:451.9px;width:23.7px;height:16.6px;line-height:17.6px;text-align:center;">p</div><div class="cell" style="left:149.6px;top:451.9px;width:274.6px;height:16.6px;line-height:17.6px;text-align:left;padding-left:4px;">set a point for the curve</div><div class="cell" style="left:49.8px;top:469.5px;width:71.4px;height:16.6px;line-height:17.6px;text-align:left;padding-left:4px;">&nbsp;&nbsp;&nbsp;without click:</div><div class="cell" style="left:123.6px;top:469.5px;width:23.7px;height:16.6px;line-height:17.6px;text-align:center;">r</div><div class="cell" style="left:149.6px;top:469.5px;width:274.6px;height:16.6px;line-height:17.6px;text-align:left;padding-left:4px;">remove last curve point</div><div class="cell" style="left:49.8px;top:487.1px;width:71.4px;height:16.6px;line-height:17.6px;text-align:left;padding-left:4px;">&nbsp;&nbsp;&nbsp;without click:</div><div class="cell" style="left:123.6px;top:487.1px;width:23.7px;height:16.6px;line-height:17.6px;text-align:center;">e</div><div class="cell" style="left:149.6px;top:487.1px;width:274.6px;height:16.6px;line-height:17.6px;text-align:left;padding-left:4px;">end of curve formation</div><div class="a" style="left:122.1px;top:114.4px;width:1px;height:389.1px;background:#2a2a2a"></div><div class="a" style="left:147.9px;top:114.4px;width:1px;height:389.1px;background:#2a2a2a"></div><div class="a" style="left:47.5px;top:81.7px;width:378.7px;height:423.1px;border:1px solid #333;border-bottom-width:1.3px;box-sizing:border-box;border-left-color:#8a8a8a"></div><svg class="a" style="left:132.5px;top:127px" width="7" height="4.5" viewBox="0 0 7 4.5"><path d="M0.8 0.6V3.6H6.2V0.6" fill="none" stroke="#000" stroke-width="1.1"/></svg>
<div class="lab" style="left:476.4px;top:497.5px;font-size:10px;"><span style="font-size:9.6px">14032</span> triangles</div><div class="btn" style="left:554px;top:498.6px;width:47.7px;height:12.4px;font-size:8.6px;line-height:11.4px;"><span style="display:inline-block;transform:scaleX(0.9)">finishing</span></div><div class="btn" style="left:615.5px;top:498.6px;width:38.9px;height:12.4px;font-size:8.6px;line-height:11.4px;"><span style="display:inline-block;transform:scaleX(0.9)">design <svg width="7" height="7" viewBox="0 0 7 7" style="vertical-align:-0.5px"><path d="M1.7 0V6M0.4 4.6L1.7 6.4L3 4.6M5.3 0V6M4 4.6L5.3 6.4L6.6 4.6" fill="none" stroke="#333" stroke-width="0.65"/></svg></span></div><div class="lab" style="left:658px;top:497.5px;font-size:10.6px;">No</div><div class="inp" style="left:673.6px;top:498.6px;width:24.8px;height:12.4px;"><span style="position:absolute;left:2px;top:0;line-height:11.4px;font-size:8.8px;-webkit-text-stroke:0.15px #000;">000</span></div><div class="btn" style="left:711.5px;top:498.6px;width:61.1px;height:12.4px;font-size:8.6px;line-height:11.4px;"><span style="display:inline-block;transform:scaleX(0.9)">export GLTF <svg width="7" height="7" viewBox="0 0 7 7" style="vertical-align:-0.5px"><path d="M1.7 0V6M0.4 4.6L1.7 6.4L3 4.6M5.3 0V6M4 4.6L5.3 6.4L6.6 4.6" fill="none" stroke="#333" stroke-width="0.65"/></svg></span></div><div class="lab" style="left:780px;top:497.5px;font-size:10.5px;">ID <span style="color:#888">=</span></div><div class="inp" style="left:801.6px;top:498.6px;width:24.2px;height:12.4px;"><span style="position:absolute;left:2px;top:0;line-height:11.4px;font-size:8.8px;-webkit-text-stroke:0.15px #000;">0</span><div class="spin" style="height:10.4px"><svg width="8" height="10.4" viewBox="0 0 8 10"><path d="M2 4 L4 2 L6 4 M2 6 L4 8 L6 6" fill="none" stroke="#8a8a8a" stroke-width="0.9"/></svg></div></div><div class="lab" style="left:829.6px;top:497.5px;font-size:10.3px;">deci.</div><div class="inp" style="left:852.6px;top:498.6px;width:23.2px;height:12.4px;"><span style="position:absolute;left:2px;top:0;line-height:11.4px;font-size:8.8px;-webkit-text-stroke:0.15px #000;">3</span><div class="spin" style="height:10.4px"><svg width="8" height="10.4" viewBox="0 0 8 10"><path d="M2 4 L4 2 L6 4 M2 6 L4 8 L6 6" fill="none" stroke="#8a8a8a" stroke-width="0.9"/></svg></div></div>
</body></html>
